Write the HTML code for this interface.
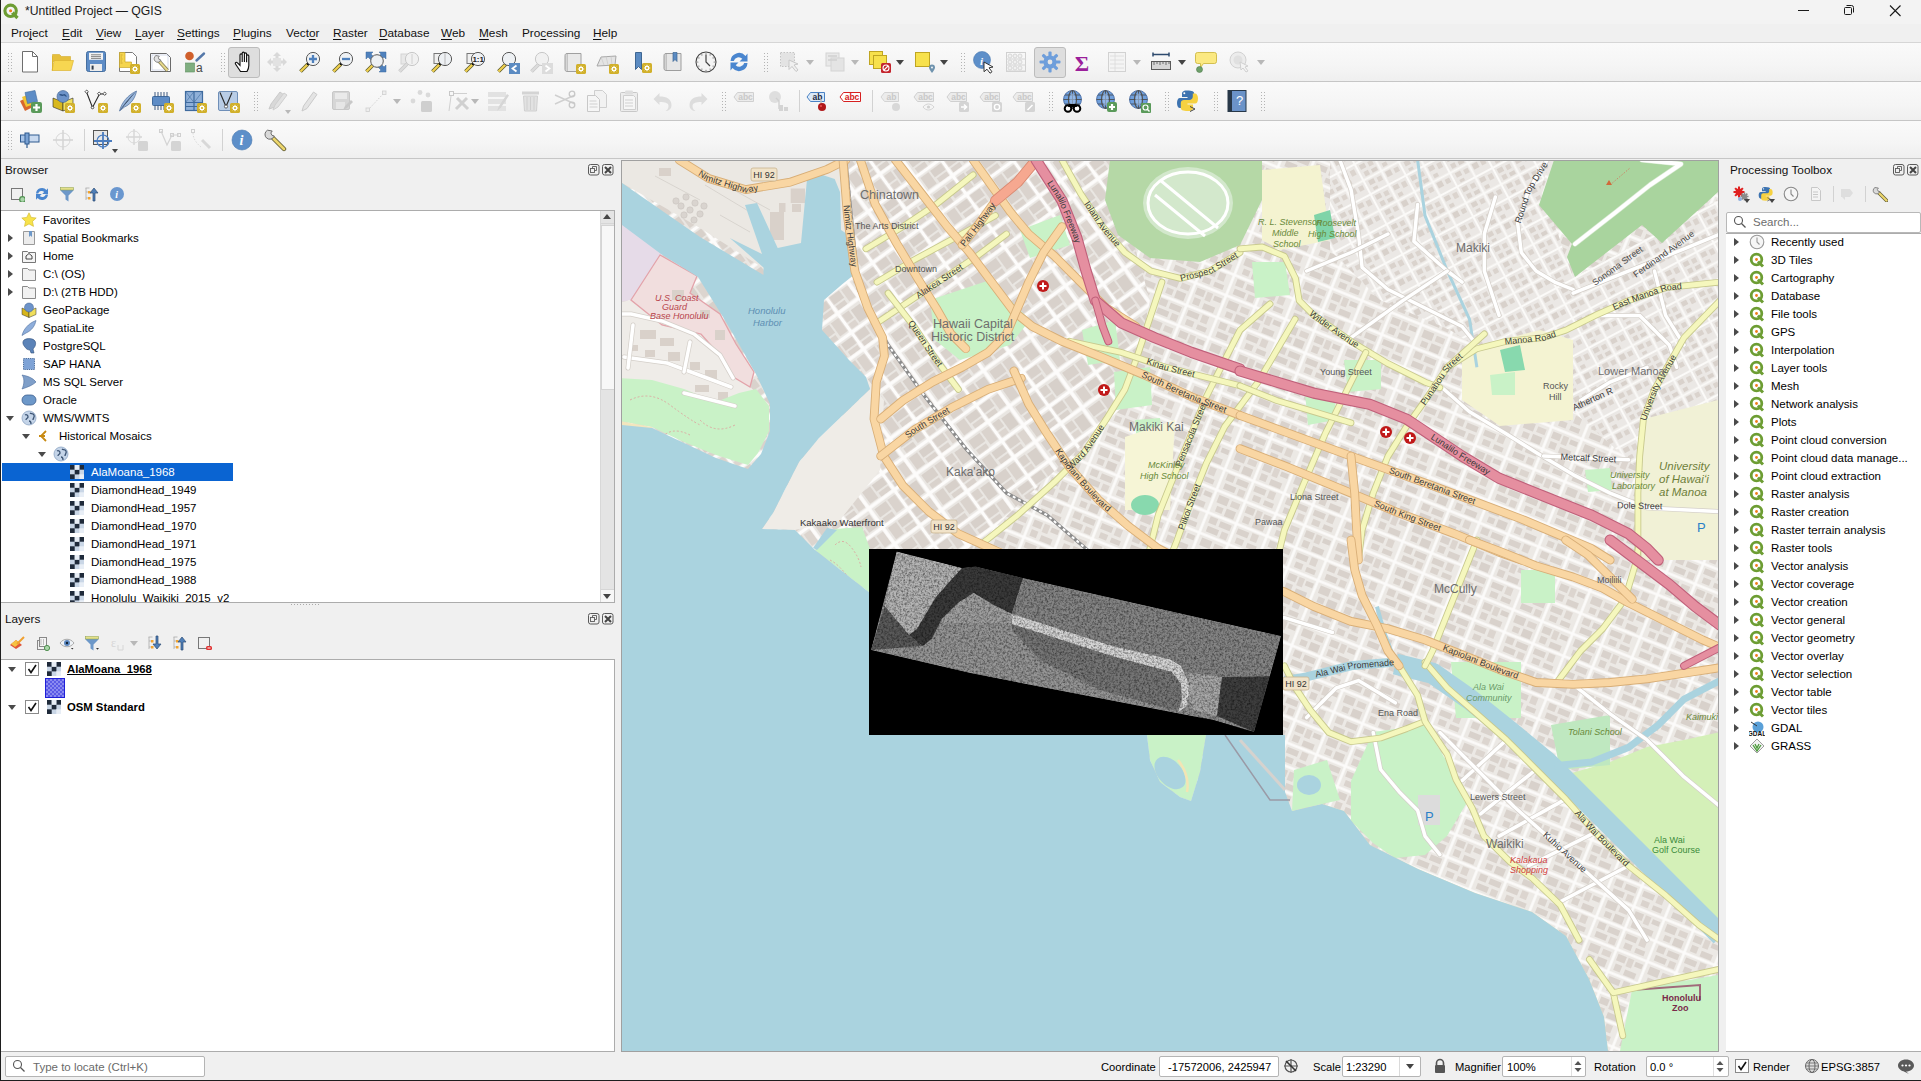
<!DOCTYPE html>
<html><head><meta charset="utf-8">
<style>
*{box-sizing:border-box;margin:0;padding:0}
html,body{width:1921px;height:1081px;overflow:hidden;background:#f0f0f0;font-family:"Liberation Sans",sans-serif;font-size:11.5px;color:#000}
.a{position:absolute}
.t{position:absolute;white-space:nowrap;line-height:14px}
.tb{position:absolute;left:1px;width:1920px;background:linear-gradient(#fafafa,#f5f5f5 60%,#efefef);border-bottom:1px solid #c6c6c6}
.tree{position:absolute;background:#fff;border:1px solid #acacac;border-left:none}
.row{position:absolute;height:18px;line-height:18px;white-space:nowrap}
.handle{position:absolute;width:5px;background-image:radial-gradient(circle,#b4b4b4 0.7px,transparent 1px);background-size:3px 3px;background-position:0 1px}
.sep{position:absolute;width:1px;background:#d2d2d2}
.dd{position:absolute;width:0;height:0;border-style:solid;border-color:#444 transparent transparent transparent}
.arr{position:absolute;width:0;height:0;border-style:solid}
.ar{border-width:4.5px 0 4.5px 5px;border-color:transparent transparent transparent #4a4a4a}
.ad{border-width:5px 4.5px 0 4.5px;border-color:#4a4a4a transparent transparent transparent}
.pbtn{position:absolute;background:#dedede;border:1px solid #bcbcbc;border-radius:3px}
.dockbtn{position:absolute;width:11px;height:11px;border:1px solid #555;border-radius:2px}
</style></head><body>

<div class="a" style="left:0;top:0;width:1921px;height:24px;background:#f3f3f3"></div>
<div class="a" style="left:0;top:24px;width:1921px;height:19px;background:#f0f0f0;border-bottom:1px solid #d6d6d6"></div>
<svg class="a" style="left:3px;top:3px" width="17" height="17" viewBox="0 0 17 17"><circle cx="7.6" cy="7.8" r="5.7" fill="none" stroke="#6d9d33" stroke-width="3.1"/><path d="M9 9.5 L14.5 15" stroke="#6d9d33" stroke-width="3.2"/><circle cx="7.6" cy="7.8" r="2.6" fill="#f4f4f4"/><circle cx="7.6" cy="7.8" r="1.5" fill="#ef7d1a"/></svg>
<div class="t" style="left:25px;top:4px;font-size:12.2px;color:#1b1b1b">*Untitled Project — QGIS</div>
<svg class="a" style="left:1796px;top:4px" width="110" height="14" viewBox="0 0 110 14"><path d="M2 6.5h11" stroke="#1a1a1a" stroke-width="1"/><rect x="48.5" y="3.5" width="7" height="7" rx="1" fill="none" stroke="#1a1a1a"/><path d="M50.5 1.5h5a2 2 0 0 1 2 2v5" fill="none" stroke="#1a1a1a"/><path d="M94 1.5l10.5 10.5M104.5 1.5l-10.5 10.5" stroke="#1a1a1a" stroke-width="1.1"/></svg>
<div class="t" style="left:11px;top:26px;font-size:11.8px;color:#111">Pro<span style="text-decoration:underline;text-underline-offset:1.5px">j</span>ect</div>
<div class="t" style="left:62px;top:26px;font-size:11.8px;color:#111"><span style="text-decoration:underline;text-underline-offset:1.5px">E</span>dit</div>
<div class="t" style="left:96px;top:26px;font-size:11.8px;color:#111"><span style="text-decoration:underline;text-underline-offset:1.5px">V</span>iew</div>
<div class="t" style="left:135px;top:26px;font-size:11.8px;color:#111"><span style="text-decoration:underline;text-underline-offset:1.5px">L</span>ayer</div>
<div class="t" style="left:177px;top:26px;font-size:11.8px;color:#111"><span style="text-decoration:underline;text-underline-offset:1.5px">S</span>ettings</div>
<div class="t" style="left:233px;top:26px;font-size:11.8px;color:#111"><span style="text-decoration:underline;text-underline-offset:1.5px">P</span>lugins</div>
<div class="t" style="left:286px;top:26px;font-size:11.8px;color:#111">Vect<span style="text-decoration:underline;text-underline-offset:1.5px">o</span>r</div>
<div class="t" style="left:333px;top:26px;font-size:11.8px;color:#111"><span style="text-decoration:underline;text-underline-offset:1.5px">R</span>aster</div>
<div class="t" style="left:379px;top:26px;font-size:11.8px;color:#111"><span style="text-decoration:underline;text-underline-offset:1.5px">D</span>atabase</div>
<div class="t" style="left:441px;top:26px;font-size:11.8px;color:#111"><span style="text-decoration:underline;text-underline-offset:1.5px">W</span>eb</div>
<div class="t" style="left:479px;top:26px;font-size:11.8px;color:#111"><span style="text-decoration:underline;text-underline-offset:1.5px">M</span>esh</div>
<div class="t" style="left:522px;top:26px;font-size:11.8px;color:#111">Pro<span style="text-decoration:underline;text-underline-offset:1.5px">c</span>essing</div>
<div class="t" style="left:593px;top:26px;font-size:11.8px;color:#111"><span style="text-decoration:underline;text-underline-offset:1.5px">H</span>elp</div>
<div class="tb" style="top:43px;height:39px"></div>
<div class="tb" style="top:82px;height:39px"></div>
<div class="tb" style="top:121px;height:38px"></div>
<div class="handle" style="left:7px;top:51.0px;height:22px"></div>
<div class="handle" style="left:220px;top:51.0px;height:22px"></div>
<div class="handle" style="left:763px;top:51.0px;height:22px"></div>
<div class="handle" style="left:960px;top:51.0px;height:22px"></div>
<div class="pbtn" style="left:228px;top:47px;width:32px;height:31px"></div>
<div class="pbtn" style="left:1034px;top:47px;width:32px;height:31px"></div>
<svg class="a" style="left:17.0px;top:50.0px" width="24" height="24" viewBox="0 0 24 24"><path d="M5.5 1.5h10l5 5v15.5h-15z" fill="#fff" stroke="#6e6e6e"/><path d="M15.5 1.5v5h5" fill="none" stroke="#6e6e6e"/></svg>
<svg class="a" style="left:50.0px;top:50.0px" width="24" height="24" viewBox="0 0 24 24"><path d="M2.5 4.5h7l2 2h9v5h-18z" fill="#e6bf3c" stroke="#d4ad2e" stroke-width=".6"/><path d="M2 20.5l2.2-10h19.3l-2.7 10z" fill="#f7d651" stroke="#dcb533" stroke-width=".7"/><path d="M2.5 6v14.5" stroke="#dcb533"/></svg>
<svg class="a" style="left:83.0px;top:50.0px" width="24" height="24" viewBox="0 0 24 24"><rect x="3.5" y="1.5" width="19" height="20" rx="2" fill="#5d8cc6" stroke="#466f9f"/><rect x="6" y="2.8" width="14" height="7" fill="#f4f4f4"/><path d="M8 4.8h10M8 6.6h10M8 8.4h10" stroke="#555" stroke-width=".7"/><rect x="7" y="14" width="12" height="7" fill="#ececec"/><rect x="8.6" y="15.6" width="2" height="4" fill="#2d3a4a"/></svg>
<svg class="a" style="left:116.0px;top:50.0px" width="24" height="24" viewBox="0 0 24 24"><path d="M3.5 2.5h13l4 4v15h-17z" fill="#fff" stroke="#7a7a7a"/><path d="M3.5 2.5h5.5v9.5h6.5v5.5h-12z" fill="#f5d54e" stroke="#c9a62a" stroke-width=".7"/><path d="M4.5 5h2M4.5 7h1.5M4.5 9h2M4.5 11h1.5M4.5 13h2" stroke="#b58f1f" stroke-width=".6"/><rect x="14" y="14" width="10" height="10" rx="1.6" fill="#d1b02a"/><g stroke="#fff" stroke-width="1"><path d="M19.0 15.8v6.4M15.8 19.0h6.4M16.8 16.8l4.4 4.4M21.2 16.8l-4.4 4.4"/></g><circle cx="19.0" cy="19.0" r="2.2" fill="#fff"/><circle cx="19.0" cy="19.0" r="1.1" fill="#d1b02a"/></svg>
<svg class="a" style="left:149.0px;top:50.0px" width="24" height="24" viewBox="0 0 24 24"><path d="M1.5 3.5h16l4 4v14h-20z" fill="#fff" stroke="#6a6a6a"/><rect x="3" y="5" width="16" height="15" fill="none" stroke="#b8c4dc" stroke-width=".6"/><path d="M9 10l9.5 10.5" stroke="#7d7650" stroke-width="3.4"/><path d="M9 10l9.5 10.5" stroke="#e6d889" stroke-width="2"/><path d="M7 5.5a3.6 3.6 0 1 0 5 4.6l-1.8-.5-.9-1.8 1-1.5z" fill="#e2e2e2" stroke="#7a7a7a" stroke-width=".9"/></svg>
<svg class="a" style="left:183.0px;top:50.0px" width="24" height="24" viewBox="0 0 24 24"><circle cx="6.5" cy="6" r="4.3" fill="#d0602c"/><path d="M13.5 10.5L21 3.5" stroke="#5578a9" stroke-width="2.4" stroke-linecap="round"/><rect x="2.5" y="13" width="9" height="9" fill="#7fae80" stroke="#5f8f60" stroke-width=".6"/><text x="13" y="21.5" font-size="12" fill="#4a4a4a" font-family="Liberation Sans">a</text></svg>
<svg class="a" style="left:232.0px;top:50.0px" width="24" height="24" viewBox="0 0 24 24"><path d="M8.5 21.5c-1.5-2.5-3.5-5-5-7.5c-.8-1.4.9-2.4 2-1.2l2.5 2.6V5c0-1.5 2.2-1.5 2.2 0v7V3.2c0-1.5 2.2-1.5 2.2 0V12V4c0-1.5 2.2-1.5 2.2 0v8.3V6c0-1.5 2.2-1.5 2.2 0v9.5c0 2.6-.8 4.3-1.8 6z" fill="#fff" stroke="#111" stroke-width="1.15"/></svg>
<svg class="a" style="left:265.0px;top:50.0px" width="24" height="24" viewBox="0 0 24 24"><path d="M12 2l4 4h-2.5v4.5H18V8l4 4-4 4v-2.5h-4.5V18H16l-4 4-4-4h2.5v-4.5H6V16l-4-4 4-4v2.5h4.5V6H8z" fill="#d9d9d9"/><rect x="8" y="8" width="8" height="8" fill="#e2e2e2"/></svg>
<svg class="a" style="left:298.0px;top:50.0px" width="24" height="24" viewBox="0 0 24 24"><path d="M2.5 21.5l7.5-7.5" stroke="#5b5a2a" stroke-width="3.8"/><path d="M2.5 21.5l7.5-7.5" stroke="#f0d050" stroke-width="2.3"/><circle cx="10" cy="14" r="1.3" fill="#111"/><circle cx="15" cy="9" r="6.6" fill="#eef1f4" stroke="#5a5a5a" stroke-width="1"/><path d="M15 5v8M11 9h8" stroke="#4f81bd" stroke-width="2.3"/></svg>
<svg class="a" style="left:331.0px;top:50.0px" width="24" height="24" viewBox="0 0 24 24"><path d="M2.5 21.5l7.5-7.5" stroke="#5b5a2a" stroke-width="3.8"/><path d="M2.5 21.5l7.5-7.5" stroke="#f0d050" stroke-width="2.3"/><circle cx="10" cy="14" r="1.3" fill="#111"/><circle cx="15" cy="9" r="6.6" fill="#eef1f4" stroke="#5a5a5a" stroke-width="1"/><path d="M11 9h8" stroke="#4f81bd" stroke-width="2.3"/></svg>
<svg class="a" style="left:364.0px;top:50.0px" width="24" height="24" viewBox="0 0 24 24"><path d="M10 2h-8v8M14 2h8v8M22 14v8h-8" fill="none" stroke="#4f81bd" stroke-width="0"/><path d="M2 2h7l-2 2 3 3-3 3-3-3-2 2z M22 2v7l-2-2-3 3-3-3 3-3-2-2z M22 22h-7l2-2-3-3 3-3 3 3 2-2z" fill="#4f81bd" stroke="#3c6a9e" stroke-width=".5"/><path d="M2.5 21.5l7.5-7.5" stroke="#5b5a2a" stroke-width="3.8"/><path d="M2.5 21.5l7.5-7.5" stroke="#f0d050" stroke-width="2.3"/><circle cx="10" cy="14" r="1.3" fill="#111"/><circle cx="13" cy="11" r="6.3" fill="#eef1f4" stroke="#5a5a5a" stroke-width="1"/></svg>
<svg class="a" style="left:397.0px;top:50.0px" width="24" height="24" viewBox="0 0 24 24"><rect x="4" y="4" width="9" height="10" fill="#e8e8e8" stroke="#d4d4d4"/><path d="M2.5 21.5l7.5-7.5" stroke="#c8c8c8" stroke-width="3.8"/><path d="M2.5 21.5l7.5-7.5" stroke="#dcdcdc" stroke-width="2.3"/><circle cx="15" cy="9" r="6.6" fill="#f1f1f1" stroke="#c8c8c8" stroke-width="1"/><path d="M15 4v10" stroke="#d0d0d0"/></svg>
<svg class="a" style="left:430.0px;top:50.0px" width="24" height="24" viewBox="0 0 24 24"><rect x="4" y="3.5" width="9" height="10" fill="#f0f0f0" stroke="#777"/><path d="M2.5 21.5l7.5-7.5" stroke="#5b5a2a" stroke-width="3.8"/><path d="M2.5 21.5l7.5-7.5" stroke="#f0d050" stroke-width="2.3"/><circle cx="10" cy="14" r="1.3" fill="#111"/><circle cx="15" cy="9" r="6.6" fill="#eef1f4" stroke="#5a5a5a" stroke-width="1"/><path d="M15 3v12" stroke="#aaa" stroke-width=".8"/></svg>
<svg class="a" style="left:463.0px;top:50.0px" width="24" height="24" viewBox="0 0 24 24"><rect x="4" y="3.5" width="9" height="10" fill="#f0f0f0" stroke="#777"/><path d="M2.5 21.5l7.5-7.5" stroke="#5b5a2a" stroke-width="3.8"/><path d="M2.5 21.5l7.5-7.5" stroke="#f0d050" stroke-width="2.3"/><circle cx="10" cy="14" r="1.3" fill="#111"/><circle cx="15" cy="9" r="6.6" fill="#eef1f4" stroke="#5a5a5a" stroke-width="1"/><text x="15.2" y="12.2" font-size="8" text-anchor="middle" font-weight="bold" fill="#222" font-family="Liberation Sans">1:1</text></svg>
<svg class="a" style="left:496.0px;top:50.0px" width="24" height="24" viewBox="0 0 24 24"><path d="M2.5 21.5l7.5-7.5" stroke="#5b5a2a" stroke-width="3.8"/><path d="M2.5 21.5l7.5-7.5" stroke="#f0d050" stroke-width="2.3"/><circle cx="10" cy="14" r="1.3" fill="#111"/><circle cx="13" cy="9" r="6.6" fill="#eef1f4" stroke="#5a5a5a" stroke-width="1"/><rect x="13" y="13" width="11" height="11" fill="#5b8bc2"/><path d="M20.5 15.5l-4 3 4 3" fill="none" stroke="#fff" stroke-width="1.8"/></svg>
<svg class="a" style="left:529.0px;top:50.0px" width="24" height="24" viewBox="0 0 24 24"><path d="M2.5 21.5l7.5-7.5" stroke="#c8c8c8" stroke-width="3.8"/><path d="M2.5 21.5l7.5-7.5" stroke="#dcdcdc" stroke-width="2.3"/><circle cx="13" cy="9" r="6.6" fill="#f1f1f1" stroke="#c8c8c8" stroke-width="1"/><rect x="13" y="13" width="11" height="11" fill="#dcdcdc"/><path d="M16.5 15.5l4 3-4 3" fill="none" stroke="#fff" stroke-width="1.8"/></svg>
<svg class="a" style="left:562.0px;top:50.0px" width="24" height="24" viewBox="0 0 24 24"><path d="M5 3.5h14v18H5z" fill="#e9e9e9" stroke="#a0a0a0"/><path d="M5 3.5c-2 0-2 2-2 2v14c0 2 2 2 2 2" fill="#d6d6d6" stroke="#a0a0a0"/><rect x="14" y="14" width="10" height="10" rx="1.6" fill="#d1b02a"/><g stroke="#fff" stroke-width="1"><path d="M19.0 15.8v6.4M15.8 19.0h6.4M16.8 16.8l4.4 4.4M21.2 16.8l-4.4 4.4"/></g><circle cx="19.0" cy="19.0" r="2.2" fill="#fff"/><circle cx="19.0" cy="19.0" r="1.1" fill="#d1b02a"/></svg>
<svg class="a" style="left:595.0px;top:50.0px" width="24" height="24" viewBox="0 0 24 24"><path d="M2 16l4-9 15-1-1 9z" fill="#e4e4e4" stroke="#a8a8a8"/><path d="M6 7l3 8M11 6l2 9M16 6l1 9" stroke="#c4c4c4" stroke-width=".6"/><rect x="14" y="14" width="10" height="10" rx="1.6" fill="#d1b02a"/><g stroke="#fff" stroke-width="1"><path d="M19.0 15.8v6.4M15.8 19.0h6.4M16.8 16.8l4.4 4.4M21.2 16.8l-4.4 4.4"/></g><circle cx="19.0" cy="19.0" r="2.2" fill="#fff"/><circle cx="19.0" cy="19.0" r="1.1" fill="#d1b02a"/></svg>
<svg class="a" style="left:629.0px;top:50.0px" width="24" height="24" viewBox="0 0 24 24"><path d="M6.5 2.5h6v17l-3-3-3 3z" fill="#5b8bc2" stroke="#3e6692"/><rect x="13" y="13" width="10" height="10" rx="1.6" fill="#d1b02a"/><g stroke="#fff" stroke-width="1"><path d="M18.0 14.8v6.4M14.8 18.0h6.4M15.8 15.8l4.4 4.4M20.2 15.8l-4.4 4.4"/></g><circle cx="18.0" cy="18.0" r="2.2" fill="#fff"/><circle cx="18.0" cy="18.0" r="1.1" fill="#d1b02a"/></svg>
<svg class="a" style="left:661.0px;top:50.0px" width="24" height="24" viewBox="0 0 24 24"><path d="M5 3.5h15v17H5z" fill="#e6e6e6" stroke="#9d9d9d"/><path d="M5 3.5c-2 0-2 2-2 2v13c0 2 2 2 2 2" fill="#d2d2d2" stroke="#9d9d9d"/><path d="M12 2.5h4v9l-2-2-2 2z" fill="#5b8bc2" stroke="#3e6692" stroke-width=".7"/></svg>
<svg class="a" style="left:694.0px;top:50.0px" width="24" height="24" viewBox="0 0 24 24"><circle cx="12" cy="12" r="10" fill="#f4f4f4" stroke="#444" stroke-width="1.1"/><path d="M12 4.5v7.5l4 4" fill="none" stroke="#444" stroke-width="1.2"/><circle cx="20.20" cy="12.00" r=".55" fill="#555"/><circle cx="19.10" cy="16.10" r=".55" fill="#555"/><circle cx="16.10" cy="19.10" r=".55" fill="#555"/><circle cx="12.00" cy="20.20" r=".55" fill="#555"/><circle cx="7.90" cy="19.10" r=".55" fill="#555"/><circle cx="4.90" cy="16.10" r=".55" fill="#555"/><circle cx="3.80" cy="12.00" r=".55" fill="#555"/><circle cx="4.90" cy="7.90" r=".55" fill="#555"/><circle cx="7.90" cy="4.90" r=".55" fill="#555"/><circle cx="12.00" cy="3.80" r=".55" fill="#555"/><circle cx="16.10" cy="4.90" r=".55" fill="#555"/><circle cx="19.10" cy="7.90" r=".55" fill="#555"/></svg>
<svg class="a" style="left:727.0px;top:50.0px" width="24" height="24" viewBox="0 0 24 24"><path d="M3.5 11a8.5 8.5 0 0 1 15-5l2-2.5v8h-8l2.8-2.7a5 5 0 0 0-8.5 2.2z" fill="#4a86cf"/><path d="M20.5 13a8.5 8.5 0 0 1-15 5l-2 2.5v-8h8l-2.8 2.7a5 5 0 0 0 8.5-2.2z" fill="#4a86cf"/></svg>
<svg class="a" style="left:778.0px;top:50.0px" width="24" height="24" viewBox="0 0 24 24"><rect x="2.5" y="2.5" width="14" height="14" fill="#e3e3e3" stroke="#c4c4c4" stroke-dasharray="1.5 1.5"/><path d="M11 10l9 4-4 1 4 5-2 1.5-4-5-3 3z" fill="#f0f0f0" stroke="#c8c8c8"/></svg>
<svg class="a" style="left:823.0px;top:50.0px" width="24" height="24" viewBox="0 0 24 24"><rect x="3" y="3" width="13" height="13" fill="#e9e9e9" stroke="#d4d4d4"/><rect x="8" y="8" width="13" height="13" fill="#e4e4e4" stroke="#d4d4d4"/><path d="M5 6h9M5 10h9" stroke="#d0d0d0" stroke-width="1.5"/></svg>
<svg class="a" style="left:868.0px;top:50.0px" width="24" height="24" viewBox="0 0 24 24"><rect x="1.5" y="1.5" width="13" height="13" fill="#f7e14c" stroke="#bfa522"/><rect x="5.5" y="5.5" width="13" height="13" fill="#f7e14c" stroke="#bfa522"/><rect x="13" y="13" width="10" height="10" rx="1.5" fill="#c4262e"/><circle cx="18" cy="18" r="3" fill="none" stroke="#fff" stroke-width="1.1"/><path d="M16 20l4-4" stroke="#fff" stroke-width="1.1"/></svg>
<svg class="a" style="left:913.0px;top:50.0px" width="24" height="24" viewBox="0 0 24 24"><rect x="2.5" y="2.5" width="14" height="14" fill="#f7e14c" stroke="#bfa522"/><path d="M19 23c-1.5-2-3-4-3-5.5a3 3 0 0 1 6 0c0 1.5-1.5 3.5-3 5.5z" fill="#6f93ae"/><circle cx="19" cy="17.5" r=".9" fill="#fff"/></svg>
<svg class="a" style="left:971.0px;top:50.0px" width="24" height="24" viewBox="0 0 24 24"><circle cx="11" cy="10" r="8.5" fill="#5d8fc9" stroke="#4978b0" stroke-width=".6"/><text x="10.5" y="14.5" font-size="11" font-weight="bold" font-style="italic" text-anchor="middle" fill="#fff" font-family="Liberation Serif">i</text><path d="M13 12l9 5-4 .8 3 4-2 1.4-3-4-3 2.5z" fill="#fff" stroke="#222" stroke-width=".9"/></svg>
<svg class="a" style="left:1004.0px;top:50.0px" width="24" height="24" viewBox="0 0 24 24"><rect x="2.5" y="2.5" width="19" height="19" fill="none" stroke="#d0d0d0"/><path d="M2 9h20M2 15h20M2 21h20" stroke="#d4d4d4"/><circle cx="6" cy="6" r="2" fill="#f0f0f0" stroke="#d0d0d0" stroke-width=".8"/><circle cx="6" cy="12" r="2" fill="#f0f0f0" stroke="#d0d0d0" stroke-width=".8"/><circle cx="6" cy="18" r="2" fill="#f0f0f0" stroke="#d0d0d0" stroke-width=".8"/><circle cx="11" cy="6" r="2" fill="#f0f0f0" stroke="#d0d0d0" stroke-width=".8"/><circle cx="11" cy="12" r="2" fill="#f0f0f0" stroke="#d0d0d0" stroke-width=".8"/><circle cx="11" cy="18" r="2" fill="#f0f0f0" stroke="#d0d0d0" stroke-width=".8"/><circle cx="16" cy="6" r="2" fill="#f0f0f0" stroke="#d0d0d0" stroke-width=".8"/><circle cx="16" cy="12" r="2" fill="#f0f0f0" stroke="#d0d0d0" stroke-width=".8"/><circle cx="16" cy="18" r="2" fill="#f0f0f0" stroke="#d0d0d0" stroke-width=".8"/></svg>
<svg class="a" style="left:1038.0px;top:50.0px" width="24" height="24" viewBox="0 0 24 24"><g transform="translate(12 12)"><rect x="-1.6" y="-10.5" width="3.2" height="5" rx="1" fill="#6e9edb" transform="rotate(0)"/><rect x="-1.6" y="-10.5" width="3.2" height="5" rx="1" fill="#6e9edb" transform="rotate(45)"/><rect x="-1.6" y="-10.5" width="3.2" height="5" rx="1" fill="#6e9edb" transform="rotate(90)"/><rect x="-1.6" y="-10.5" width="3.2" height="5" rx="1" fill="#6e9edb" transform="rotate(135)"/><rect x="-1.6" y="-10.5" width="3.2" height="5" rx="1" fill="#6e9edb" transform="rotate(180)"/><rect x="-1.6" y="-10.5" width="3.2" height="5" rx="1" fill="#6e9edb" transform="rotate(225)"/><rect x="-1.6" y="-10.5" width="3.2" height="5" rx="1" fill="#6e9edb" transform="rotate(270)"/><rect x="-1.6" y="-10.5" width="3.2" height="5" rx="1" fill="#6e9edb" transform="rotate(315)"/><circle r="6.6" fill="#6e9edb"/><circle r="2.4" fill="#e6e6e6"/></g></svg>
<svg class="a" style="left:1070.0px;top:50.0px" width="24" height="24" viewBox="0 0 24 24"><text x="12" y="20.5" font-size="22" font-weight="bold" text-anchor="middle" fill="#9b1e9b" font-family="Liberation Serif">Σ</text></svg>
<svg class="a" style="left:1105.0px;top:50.0px" width="24" height="24" viewBox="0 0 24 24"><rect x="3.5" y="2.5" width="17" height="19" fill="#f4f4f4" stroke="#d2d2d2"/><path d="M5 6h14M5 10h14M5 14h14M5 18h14M10 3v18" stroke="#dadada" stroke-width=".8"/></svg>
<svg class="a" style="left:1149.0px;top:50.0px" width="24" height="24" viewBox="0 0 24 24"><path d="M4 4.5h16M4 2.5v4M20 2.5v4" stroke="#2d4a6e" stroke-width="1.5"/><rect x="2.5" y="11.5" width="19" height="8" fill="#d6d6d6" stroke="#5a5a5a"/><path d="M5 12v3M8 12v2M11 12v3M14 12v2M17 12v3M20 12v2" stroke="#555" stroke-width=".8"/></svg>
<svg class="a" style="left:1194.0px;top:50.0px" width="24" height="24" viewBox="0 0 24 24"><path d="M3.5 2.5h17a2 2 0 0 1 2 2v7a2 2 0 0 1-2 2h-11l-3 4v-4h-3a2 2 0 0 1-2-2v-7a2 2 0 0 1 2-2z" fill="#fbe982" stroke="#c9b335" stroke-width=".8"/><circle cx="5.5" cy="19.5" r="3" fill="#6ea06a" stroke="#4d7a4b" stroke-width=".6"/></svg>
<svg class="a" style="left:1228.0px;top:50.0px" width="24" height="24" viewBox="0 0 24 24"><circle cx="10" cy="10" r="8" fill="#ececec" stroke="#d2d2d2"/><circle cx="10" cy="10" r="4.5" fill="#e0e0e0"/><path d="M12 12l8 4-3 1 3 4-2 1-3-4-2 2z" fill="#f4f4f4" stroke="#d0d0d0"/></svg>
<div class="dd" style="left:805.5px;top:59.5px;border-width:5px 4.5px 0 4.5px;border-top-color:#b8b8b8"></div>
<div class="dd" style="left:850.5px;top:59.5px;border-width:5px 4.5px 0 4.5px;border-top-color:#b8b8b8"></div>
<div class="dd" style="left:895.5px;top:59.5px;border-width:5px 4.5px 0 4.5px;border-top-color:#444"></div>
<div class="dd" style="left:939.5px;top:59.5px;border-width:5px 4.5px 0 4.5px;border-top-color:#444"></div>
<div class="dd" style="left:1132.5px;top:59.5px;border-width:5px 4.5px 0 4.5px;border-top-color:#b8b8b8"></div>
<div class="dd" style="left:1177.5px;top:59.5px;border-width:5px 4.5px 0 4.5px;border-top-color:#444"></div>
<div class="dd" style="left:1256.5px;top:59.5px;border-width:5px 4.5px 0 4.5px;border-top-color:#b8b8b8"></div>
<div class="handle" style="left:7px;top:90.0px;height:22px"></div>
<div class="handle" style="left:253px;top:90.0px;height:22px"></div>
<div class="handle" style="left:721px;top:90.0px;height:22px"></div>
<div class="handle" style="left:1048px;top:90.0px;height:22px"></div>
<div class="handle" style="left:1164px;top:90.0px;height:22px"></div>
<div class="handle" style="left:1213px;top:90.0px;height:22px"></div>
<div class="handle" style="left:1260px;top:90.0px;height:22px"></div>
<div class="sep" style="left:799px;top:90.0px;height:22px"></div>
<div class="sep" style="left:872px;top:90.0px;height:22px"></div>
<svg class="a" style="left:18.0px;top:89.0px" width="24" height="24" viewBox="0 0 24 24"><path d="M2 12l8-4 5 10-8 4z" fill="#d8672e"/><path d="M4 8l8-3 4 10-8 3z" fill="#f2c531"/><path d="M7 3.5l10-2 2.5 11-10 2z" fill="#5d8cc6" stroke="#3f6b9e" stroke-width=".6"/><rect x="13" y="13" width="11" height="11" rx="2" fill="#5a9a5a"/><path d="M18.5 15v7M15 18.5h7" stroke="#fff" stroke-width="2.2"/></svg>
<svg class="a" style="left:51.0px;top:89.0px" width="24" height="24" viewBox="0 0 24 24"><path d="M2 9l10 4v9L2 18z" fill="#d8b81e" stroke="#2a2a2a" stroke-width=".6"/><path d="M12 13l10-4v9l-10 4z" fill="#f0e060" stroke="#2a2a2a" stroke-width=".6"/><circle cx="12" cy="7.5" r="6" fill="#6d93c9" stroke="#3d5f8f" stroke-width=".6"/><path d="M8.5 6c1.5-1 2.5 1 4 0s2 1.5 3 1" stroke="#2f5487" stroke-width="1.4" fill="none"/><rect x="14" y="14" width="10" height="10" rx="1.6" fill="#d1b02a"/><g stroke="#fff" stroke-width="1"><path d="M19.0 15.8v6.4M15.8 19.0h6.4M16.8 16.8l4.4 4.4M21.2 16.8l-4.4 4.4"/></g><circle cx="19.0" cy="19.0" r="2.2" fill="#fff"/><circle cx="19.0" cy="19.0" r="1.1" fill="#d1b02a"/></svg>
<svg class="a" style="left:84.0px;top:89.0px" width="24" height="24" viewBox="0 0 24 24"><path d="M2.5 3l6 15.5 7-13.5h5" fill="none" stroke="#2a2a2a" stroke-width="1.1"/><g fill="#fff" stroke="#333" stroke-width=".8"><rect x="1.5" y="1.5" width="2.4" height="2.4" transform="rotate(45 2.7 2.7)"/><circle cx="8.5" cy="18.5" r="1.3"/><rect x="14" y="3.5" width="2.4" height="2.4" transform="rotate(45 15.2 4.7)"/><rect x="19.5" y="3.5" width="2.4" height="2.4" transform="rotate(45 20.7 4.7)"/></g><rect x="14" y="14" width="10" height="10" rx="1.6" fill="#d1b02a"/><g stroke="#fff" stroke-width="1"><path d="M19.0 15.8v6.4M15.8 19.0h6.4M16.8 16.8l4.4 4.4M21.2 16.8l-4.4 4.4"/></g><circle cx="19.0" cy="19.0" r="2.2" fill="#fff"/><circle cx="19.0" cy="19.0" r="1.1" fill="#d1b02a"/></svg>
<svg class="a" style="left:117.0px;top:89.0px" width="24" height="24" viewBox="0 0 24 24"><path d="M2.5 22c2-8 8-16 17-20c-1 6-5 13-12 16z" fill="#9cb8dc" stroke="#4f6f9c" stroke-width=".7"/><path d="M3 21.5c4-6 9-12 15-18" stroke="#4f6f9c" stroke-width=".7"/><rect x="14" y="14" width="10" height="10" rx="1.6" fill="#d1b02a"/><g stroke="#fff" stroke-width="1"><path d="M19.0 15.8v6.4M15.8 19.0h6.4M16.8 16.8l4.4 4.4M21.2 16.8l-4.4 4.4"/></g><circle cx="19.0" cy="19.0" r="2.2" fill="#fff"/><circle cx="19.0" cy="19.0" r="1.1" fill="#d1b02a"/></svg>
<svg class="a" style="left:150.0px;top:89.0px" width="24" height="24" viewBox="0 0 24 24"><rect x="2.5" y="7.5" width="17" height="9" rx="1" fill="#5d8cc6" stroke="#3f6b9e"/><path d="M5 3v4.5M5 16.5v4.5" stroke="#3f5a80" stroke-width="1"/><path d="M8 3v4.5M8 16.5v4.5" stroke="#3f5a80" stroke-width="1"/><path d="M11 3v4.5M11 16.5v4.5" stroke="#3f5a80" stroke-width="1"/><path d="M14 3v4.5M14 16.5v4.5" stroke="#3f5a80" stroke-width="1"/><path d="M17 3v4.5M17 16.5v4.5" stroke="#3f5a80" stroke-width="1"/><rect x="14" y="14" width="10" height="10" rx="1.6" fill="#d1b02a"/><g stroke="#fff" stroke-width="1"><path d="M19.0 15.8v6.4M15.8 19.0h6.4M16.8 16.8l4.4 4.4M21.2 16.8l-4.4 4.4"/></g><circle cx="19.0" cy="19.0" r="2.2" fill="#fff"/><circle cx="19.0" cy="19.0" r="1.1" fill="#d1b02a"/></svg>
<svg class="a" style="left:183.0px;top:89.0px" width="24" height="24" viewBox="0 0 24 24"><rect x="2.5" y="2.5" width="17" height="19" fill="#8fb0d8" stroke="#3f6b9e" stroke-width="1.2"/><path d="M2.5 13.5h17M11 2.5v19M2.5 17.5h17" stroke="#3f6b9e" stroke-width="1.2"/><path d="M2.5 2.5l8.5 11M11 2.5l-8.5 11M11 13.5l8.5-11" stroke="#3f6b9e" stroke-width=".6"/><rect x="14" y="14" width="10" height="10" rx="1.6" fill="#d1b02a"/><g stroke="#fff" stroke-width="1"><path d="M19.0 15.8v6.4M15.8 19.0h6.4M16.8 16.8l4.4 4.4M21.2 16.8l-4.4 4.4"/></g><circle cx="19.0" cy="19.0" r="2.2" fill="#fff"/><circle cx="19.0" cy="19.0" r="1.1" fill="#d1b02a"/></svg>
<svg class="a" style="left:216.0px;top:89.0px" width="24" height="24" viewBox="0 0 24 24"><rect x="2.5" y="2.5" width="19" height="19" rx="1.5" fill="#b9cde6" stroke="#6f8fb8"/><path d="M4 3.5l6 14 6-14" fill="none" stroke="#2a2a2a" stroke-width="1.1"/><circle cx="10" cy="17.5" r="1.6" fill="#fff" stroke="#333" stroke-width=".7"/><rect x="14" y="14" width="10" height="10" rx="1.6" fill="#d1b02a"/><g stroke="#fff" stroke-width="1"><path d="M19.0 15.8v6.4M15.8 19.0h6.4M16.8 16.8l4.4 4.4M21.2 16.8l-4.4 4.4"/></g><circle cx="19.0" cy="19.0" r="2.2" fill="#fff"/><circle cx="19.0" cy="19.0" r="1.1" fill="#d1b02a"/></svg>
<svg class="a" style="left:265.0px;top:89.0px" width="24" height="24" viewBox="0 0 24 24"><path d="M4 20l2-5 9-12 4 3-9 12z" fill="#d8d8d8" stroke="#cacaca"/><path d="M8 21l2-5 9-12 3 2-9 12z" fill="#e2e2e2" stroke="#cfcfcf"/></svg>
<svg class="a" style="left:297.0px;top:89.0px" width="24" height="24" viewBox="0 0 24 24"><path d="M5 22l1.5-5 10-14 3.5 2.5-10 14z" fill="#e4e4e4" stroke="#cacaca"/></svg>
<svg class="a" style="left:330.0px;top:89.0px" width="24" height="24" viewBox="0 0 24 24"><rect x="2.5" y="2.5" width="17" height="18" rx="1.5" fill="#d6d6d6" stroke="#c8c8c8"/><rect x="5" y="4" width="12" height="6" fill="#eaeaea"/><rect x="6" y="13" width="9" height="7" fill="#e6e6e6"/><path d="M13 21l2-4 6-6 2 2-6 6z" fill="#c8c8c8"/></svg>
<svg class="a" style="left:364.0px;top:89.0px" width="24" height="24" viewBox="0 0 24 24"><path d="M4 21L20 4" stroke="#d0d0d0" stroke-dasharray="1.5 1.5"/><rect x="2" y="19" width="3.5" height="3.5" fill="#eee" stroke="#cfcfcf" stroke-width=".8"/><rect x="18.5" y="2" width="3.5" height="3.5" fill="#eee" stroke="#cfcfcf" stroke-width=".8"/></svg>
<svg class="a" style="left:409.0px;top:89.0px" width="24" height="24" viewBox="0 0 24 24"><circle cx="11" cy="3.5" r="2.4" fill="#dadada"/><circle cx="19" cy="6" r="2.4" fill="#dadada"/><circle cx="4" cy="12" r="2.4" fill="#dadada"/><rect x="12" y="12" width="11" height="11" rx="1.5" fill="#cfcfcf"/></svg>
<svg class="a" style="left:447.0px;top:89.0px" width="24" height="24" viewBox="0 0 24 24"><rect x="2.5" y="2.5" width="4" height="4" fill="none" stroke="#c8c8c8"/><path d="M7 4.5h13M4 7l-2 15" stroke="#d0d0d0"/><path d="M9 20l11-11M10 9l11 11" stroke="#d0d0d0" stroke-width="3"/></svg>
<svg class="a" style="left:486.0px;top:89.0px" width="24" height="24" viewBox="0 0 24 24"><rect x="2" y="3" width="18" height="5" fill="#e2e2e2"/><rect x="2" y="10" width="18" height="5" fill="#e2e2e2"/><rect x="2" y="17" width="18" height="5" fill="#e2e2e2"/><path d="M11 22l2-5 8-12 2 1.5-8 12z" fill="#d6d6d6"/></svg>
<svg class="a" style="left:519.0px;top:89.0px" width="24" height="24" viewBox="0 0 24 24"><rect x="3" y="2.5" width="17" height="3" fill="#d4d4d4"/><path d="M4.5 7h14l-1 15h-12z" fill="#e2e2e2" stroke="#d0d0d0"/><path d="M8 8v13M11.5 8v13M15 8v13" stroke="#d0d0d0"/></svg>
<svg class="a" style="left:553.0px;top:89.0px" width="24" height="24" viewBox="0 0 24 24"><path d="M2 6l20 9M2 15l20-9" stroke="#d0d0d0" stroke-width="1.4"/><circle cx="19" cy="5" r="2.8" fill="none" stroke="#c8c8c8" stroke-width="1.3"/><circle cx="19" cy="16" r="2.8" fill="none" stroke="#c8c8c8" stroke-width="1.3"/></svg>
<svg class="a" style="left:585.0px;top:89.0px" width="24" height="24" viewBox="0 0 24 24"><path d="M9.5 1.5h8l4 4v13h-12z" fill="#f2f2f2" stroke="#cfcfcf"/><path d="M2.5 6.5h8l4 4v12h-12z" fill="#f6f6f6" stroke="#c8c8c8"/><path d="M4.5 12h7M4.5 15h8M4.5 18h8" stroke="#d0d0d0"/></svg>
<svg class="a" style="left:618.0px;top:89.0px" width="24" height="24" viewBox="0 0 24 24"><rect x="2.5" y="3.5" width="17" height="19" rx="1" fill="#ececec" stroke="#c8c8c8"/><rect x="7" y="1.5" width="8" height="4" rx="1" fill="#dedede"/><path d="M5.5 6.5h10l2 2v12h-12z" fill="#f6f6f6" stroke="#cfcfcf"/><path d="M7 11h8M7 14h8M7 17h8" stroke="#d0d0d0"/></svg>
<svg class="a" style="left:652.0px;top:89.0px" width="24" height="24" viewBox="0 0 24 24"><path d="M1.5 10l6-6v3.5c7 0 12 2.5 12 8.5c0 4-3 6-6 6c2-1 3-3 3-5c0-3-3-4-9-4v3z" fill="#dddddd"/></svg>
<svg class="a" style="left:685.0px;top:89.0px" width="24" height="24" viewBox="0 0 24 24"><path d="M22.5 10l-6-6v3.5c-7 0-12 2.5-12 8.5c0 4 3 6 6 6c-2-1-3-3-3-5c0-3 3-4 9-4v3z" fill="#dddddd"/></svg>
<svg class="a" style="left:733.0px;top:89.0px" width="24" height="24" viewBox="0 0 24 24"><path d="M4.5 3.5h16v9h-16l-3.5-4.5z" fill="#ececec" stroke="#d0d0d0"/><text x="12.5" y="11.2" font-size="8.5" font-weight="bold" text-anchor="middle" fill="#c8c8c8" font-family="Liberation Sans">abc</text></svg>
<svg class="a" style="left:767.0px;top:89.0px" width="24" height="24" viewBox="0 0 24 24"><circle cx="8" cy="8" r="6" fill="#dedede"/><path d="M9 9l3 3v8" fill="none" stroke="#d0d0d0" stroke-width="1.4"/><rect x="12" y="16" width="4" height="6" fill="#d4d4d4"/><rect x="17" y="18" width="4" height="4" fill="#d4d4d4"/></svg>
<svg class="a" style="left:806.0px;top:89.0px" width="24" height="24" viewBox="0 0 24 24"><path d="M4.5 3.5h14v9h-14l-3.5-4.5z" fill="#dbe9f8" stroke="#4a82c4"/><text x="11.5" y="11.2" font-size="8.5" font-weight="bold" text-anchor="middle" fill="#1a2a44" font-family="Liberation Sans">ab</text><path d="M15 10v4" stroke="#bbb" stroke-width="1.5"/><circle cx="16" cy="18" r="4" fill="#b0181a"/><circle cx="15" cy="17" r="1" fill="#e55"/></svg>
<svg class="a" style="left:839.0px;top:89.0px" width="24" height="24" viewBox="0 0 24 24"><path d="M4.5 3.5h17v9h-17l-3.5-4.5z" fill="#fff" stroke="#d62020"/><text x="13.0" y="11.2" font-size="8.5" font-weight="bold" text-anchor="middle" fill="#d62020" font-family="Liberation Sans">abc</text></svg>
<svg class="a" style="left:880.0px;top:89.0px" width="24" height="24" viewBox="0 0 24 24"><path d="M4.5 3.5h14v9h-14l-3.5-4.5z" fill="#ececec" stroke="#d4d4d4"/><text x="11.5" y="11.2" font-size="8.5" font-weight="bold" text-anchor="middle" fill="#c8c8c8" font-family="Liberation Sans">ab</text><circle cx="16" cy="18" r="4" fill="#d8d8d8"/></svg>
<svg class="a" style="left:913.0px;top:89.0px" width="24" height="24" viewBox="0 0 24 24"><path d="M4.5 3.5h16v9h-16l-3.5-4.5z" fill="#ececec" stroke="#d0d0d0"/><text x="12.5" y="11.2" font-size="8.5" font-weight="bold" text-anchor="middle" fill="#c8c8c8" font-family="Liberation Sans">abc</text><path d="M10 18c3-4 8-4 11 0c-3 4-8 4-11 0z" fill="#f4f4f4" stroke="#d4d4d4"/><circle cx="15.5" cy="18" r="1.6" fill="#d0d0d0"/></svg>
<svg class="a" style="left:946.0px;top:89.0px" width="24" height="24" viewBox="0 0 24 24"><path d="M4.5 3.5h16v9h-16l-3.5-4.5z" fill="#ececec" stroke="#d0d0d0"/><text x="12.5" y="11.2" font-size="8.5" font-weight="bold" text-anchor="middle" fill="#c8c8c8" font-family="Liberation Sans">abc</text><rect x="13" y="13" width="10" height="10" rx="1.5" fill="#d4d4d4"/><path d="M15 18h5M18 15.5l2.5 2.5-2.5 2.5" fill="none" stroke="#fff" stroke-width="1.6"/></svg>
<svg class="a" style="left:979.0px;top:89.0px" width="24" height="24" viewBox="0 0 24 24"><path d="M4.5 3.5h16v9h-16l-3.5-4.5z" fill="#ececec" stroke="#d0d0d0"/><text x="12.5" y="11.2" font-size="8.5" font-weight="bold" text-anchor="middle" fill="#c8c8c8" font-family="Liberation Sans">abc</text><rect x="13" y="13" width="10" height="10" rx="1.5" fill="#d4d4d4"/><circle cx="18" cy="18" r="2.6" fill="none" stroke="#fff" stroke-width="1.4"/></svg>
<svg class="a" style="left:1012.0px;top:89.0px" width="24" height="24" viewBox="0 0 24 24"><path d="M4.5 3.5h16v9h-16l-3.5-4.5z" fill="#ececec" stroke="#d0d0d0"/><text x="12.5" y="11.2" font-size="8.5" font-weight="bold" text-anchor="middle" fill="#c8c8c8" font-family="Liberation Sans">abc</text><rect x="13" y="13" width="10" height="10" rx="1.5" fill="#d4d4d4"/><path d="M15.5 21l5-5" stroke="#fff" stroke-width="1.6"/></svg>
<svg class="a" style="left:1061.0px;top:89.0px" width="24" height="24" viewBox="0 0 24 24"><circle cx="11.5" cy="10.5" r="9" fill="#6f9fdc" stroke="#3a5f9a" stroke-width=".8"/><ellipse cx="11.5" cy="10.5" rx="4" ry="9" fill="none" stroke="#555" stroke-width="1.2"/><path d="M2.5 10.5h18M4 6h15M4 15h15M11.5 1.5v18" stroke="#444" stroke-width=".8"/><ellipse cx="11.5" cy="10.5" rx="3" ry="6" fill="#a9c8f0" opacity=".6"/><circle cx="7" cy="19.5" r="3.3" fill="#fff" stroke="#000" stroke-width="2"/><circle cx="16" cy="19.5" r="3.3" fill="#fff" stroke="#000" stroke-width="2"/><path d="M8 15h7l1 3H7z" fill="#000"/></svg>
<svg class="a" style="left:1094.0px;top:89.0px" width="24" height="24" viewBox="0 0 24 24"><circle cx="11.5" cy="10.5" r="9" fill="#6f9fdc" stroke="#3a5f9a" stroke-width=".8"/><ellipse cx="11.5" cy="10.5" rx="4" ry="9" fill="none" stroke="#555" stroke-width="1.2"/><path d="M2.5 10.5h18M4 6h15M4 15h15M11.5 1.5v18" stroke="#444" stroke-width=".8"/><ellipse cx="11.5" cy="10.5" rx="3" ry="6" fill="#a9c8f0" opacity=".6"/><rect x="13" y="13" width="10" height="10" rx="2" fill="#5a9a5a"/><path d="M18.0 15v6M15 18.0h6" stroke="#fff" stroke-width="2.2"/></svg>
<svg class="a" style="left:1127.0px;top:89.0px" width="24" height="24" viewBox="0 0 24 24"><circle cx="11.5" cy="10.5" r="9" fill="#6f9fdc" stroke="#3a5f9a" stroke-width=".8"/><ellipse cx="11.5" cy="10.5" rx="4" ry="9" fill="none" stroke="#555" stroke-width="1.2"/><path d="M2.5 10.5h18M4 6h15M4 15h15M11.5 1.5v18" stroke="#444" stroke-width=".8"/><ellipse cx="11.5" cy="10.5" rx="3" ry="6" fill="#a9c8f0" opacity=".6"/><rect x="14" y="14" width="10" height="10" rx="1" fill="#5a9a5a"/><circle cx="18.5" cy="18.5" r="2.5" fill="none" stroke="#fff" stroke-width="1.2"/><path d="M20 20l2.5 2.5" stroke="#fff" stroke-width="1.4"/></svg>
<svg class="a" style="left:1176.0px;top:89.0px" width="24" height="24" viewBox="0 0 24 24"><path d="M11 1.5c-4.5 0-5 2-5 3.5V8h5.5v1H4C2 9 1 11 1 14s1.2 5 3 5h2.2v-3c0-2 1.5-3.5 3.5-3.5h5.5c1.5 0 3-1.2 3-3V4.5C18.2 2.8 16.5 1.5 11 1.5z" fill="#3d73b0"/><circle cx="8.3" cy="4.2" r="1" fill="#fff"/><path d="M12 22c4.5 0 5-2 5-3.5V15.5h-5.5v-1H19c2 0 3-2 3-5s-1.2-5-3-5h-2.2v3c0 2-1.5 3.5-3.5 3.5H7.8c-1.5 0-3 1.2-3 3V19c0 1.7 1.7 3 7.2 3z" fill="#f6d141"/><path d="M14 17.5l5 2.5-5 2.5" fill="none" stroke="#444" stroke-width="1"/></svg>
<svg class="a" style="left:1225.0px;top:89.0px" width="24" height="24" viewBox="0 0 24 24"><rect x="3" y="1.5" width="18" height="21" fill="#6b93c8" stroke="#283848"/><rect x="3" y="1.5" width="4" height="21" fill="#283848"/><text x="14.5" y="16" font-size="13" text-anchor="middle" fill="#fff" font-family="Liberation Sans">?</text></svg>
<div class="dd" style="left:285px;top:109.5px;border-width:4px 3px 0 3px;border-top-color:#b8b8b8"></div>
<div class="dd" style="left:392.5px;top:98.5px;border-width:5px 4.5px 0 4.5px;border-top-color:#b8b8b8"></div>
<div class="dd" style="left:470.5px;top:98.5px;border-width:5px 4.5px 0 4.5px;border-top-color:#b8b8b8"></div>
<div class="handle" style="left:7px;top:129.0px;height:22px"></div>
<div class="sep" style="left:84px;top:129.0px;height:22px"></div>
<div class="sep" style="left:222px;top:129.0px;height:22px"></div>
<svg class="a" style="left:18.0px;top:128.0px" width="24" height="24" viewBox="0 0 24 24"><rect x="2.5" y="7" width="8" height="7" fill="#a8c4e8" stroke="#2e5a8f"/><rect x="10" y="7" width="11" height="7" fill="#c9daf0" stroke="#2e5a8f"/><rect x="7" y="5" width="4" height="11" fill="#7aa2d4" stroke="#2e5a8f"/><path d="M9 16v4" stroke="#2e5a8f" stroke-width="1.2"/></svg>
<svg class="a" style="left:51.0px;top:128.0px" width="24" height="24" viewBox="0 0 24 24"><circle cx="12" cy="12" r="7" fill="none" stroke="#d8d8d8"/><path d="M12 2v20M2 12h20" stroke="#d4d4d4" stroke-width="1.5"/></svg>
<svg class="a" style="left:91.0px;top:128.0px" width="24" height="24" viewBox="0 0 24 24"><rect x="2.5" y="2.5" width="14" height="14" fill="#e8e8e8" stroke="#555"/><circle cx="12" cy="13" r="6" fill="none" stroke="#4a7cbf" stroke-width="1.2"/><path d="M12 4v17M3 13h18" stroke="#4a7cbf" stroke-width="1.8"/></svg>
<svg class="a" style="left:125.0px;top:128.0px" width="24" height="24" viewBox="0 0 24 24"><circle cx="9" cy="9" r="6" fill="none" stroke="#dadada"/><path d="M9 1v16M1 9h16" stroke="#d6d6d6" stroke-width="1.4"/><rect x="13" y="13" width="10" height="10" rx="1.5" fill="#d4d4d4"/></svg>
<svg class="a" style="left:158.0px;top:128.0px" width="24" height="24" viewBox="0 0 24 24"><path d="M3 3l6 14 5-10h7" fill="none" stroke="#d4d4d4" stroke-width="1.2"/><rect x="1.5" y="1.5" width="3" height="3" fill="none" stroke="#d0d0d0"/><rect x="12.5" y="5.5" width="3" height="3" fill="none" stroke="#d0d0d0"/><rect x="19.5" y="5.5" width="3" height="3" fill="none" stroke="#d0d0d0"/><rect x="13" y="13" width="10" height="10" rx="1.5" fill="#d4d4d4"/></svg>
<svg class="a" style="left:190.0px;top:128.0px" width="24" height="24" viewBox="0 0 24 24"><rect x="1.5" y="1.5" width="3" height="3" fill="none" stroke="#d0d0d0"/><path d="M3 5c0 5 3 10 8 14" fill="none" stroke="#dadada" stroke-dasharray="1.5 1.5"/><path d="M12 12l8 8" stroke="#d8d8d8" stroke-width="3"/></svg>
<svg class="a" style="left:230.0px;top:128.0px" width="24" height="24" viewBox="0 0 24 24"><circle cx="12" cy="12" r="10" fill="#5d8fc9" stroke="#4877ae" stroke-width=".6"/><text x="11.5" y="17" font-size="14" font-weight="bold" font-style="italic" text-anchor="middle" fill="#fff" font-family="Liberation Serif">i</text></svg>
<svg class="a" style="left:263.0px;top:128.0px" width="24" height="24" viewBox="0 0 24 24"><path d="M10 10l11 11" stroke="#5f5a35" stroke-width="4.4" stroke-linecap="round"/><path d="M10 10l11 11" stroke="#ecd66c" stroke-width="2.8" stroke-linecap="round"/><path d="M4.5 2.2a4.8 4.8 0 1 0 6.8 5.8l-2.3-.6-1.2-2.4 1.4-2z" fill="#d9d9d9" stroke="#6f6f6f" stroke-width="1"/></svg>
<div class="dd" style="left:112px;top:148.5px;border-width:4px 3px 0 3px;border-top-color:#444"></div>
<div class="a" style="left:1px;top:159px;width:620px;height:893px;background:#f0f0f0"></div>
<div class="t" style="left:5px;top:163px;font-size:11.8px;color:#111">Browser</div>
<svg class="a" style="left:588px;top:164px" width="26" height="12" viewBox="0 0 26 12"><rect x=".5" y=".5" width="10.5" height="10.5" rx="2" fill="none" stroke="#5a5a5a"/><rect x="2.5" y="4.5" width="4" height="4" fill="none" stroke="#5a5a5a" stroke-width=".9"/><path d="M4.5 4.5v-2h4v4h-2" fill="none" stroke="#5a5a5a" stroke-width=".9"/><rect x="14.5" y=".5" width="10.5" height="10.5" rx="2" fill="none" stroke="#5a5a5a"/><path d="M17 3l6 6M23 3l-6 6" stroke="#444" stroke-width="2"/></svg>
<div class="t" style="left:5px;top:612px;font-size:11.8px;color:#111">Layers</div>
<svg class="a" style="left:588px;top:613px" width="26" height="12" viewBox="0 0 26 12"><rect x=".5" y=".5" width="10.5" height="10.5" rx="2" fill="none" stroke="#5a5a5a"/><rect x="2.5" y="4.5" width="4" height="4" fill="none" stroke="#5a5a5a" stroke-width=".9"/><path d="M4.5 4.5v-2h4v4h-2" fill="none" stroke="#5a5a5a" stroke-width=".9"/><rect x="14.5" y=".5" width="10.5" height="10.5" rx="2" fill="none" stroke="#5a5a5a"/><path d="M17 3l6 6M23 3l-6 6" stroke="#444" stroke-width="2"/></svg>
<div class="t" style="left:1730px;top:163px;font-size:11.8px;color:#111">Processing Toolbox</div>
<svg class="a" style="left:1893px;top:164px" width="26" height="12" viewBox="0 0 26 12"><rect x=".5" y=".5" width="10.5" height="10.5" rx="2" fill="none" stroke="#5a5a5a"/><rect x="2.5" y="4.5" width="4" height="4" fill="none" stroke="#5a5a5a" stroke-width=".9"/><path d="M4.5 4.5v-2h4v4h-2" fill="none" stroke="#5a5a5a" stroke-width=".9"/><rect x="14.5" y=".5" width="10.5" height="10.5" rx="2" fill="none" stroke="#5a5a5a"/><path d="M17 3l6 6M23 3l-6 6" stroke="#444" stroke-width="2"/></svg>
<svg class="a" style="left:9px;top:186px" width="16" height="16" viewBox="0 0 16 16"><rect x="2.5" y="2.5" width="11" height="11" fill="none" stroke="#777"/><circle cx="13.5" cy="13.5" r="2.8" fill="#a9d6a9" stroke="#4f8f4f" stroke-width="1.2"/></svg>
<svg class="a" style="left:34px;top:186px" width="16" height="16" viewBox="0 0 16 16"><path d="M2 7.5a6 6 0 0 1 10.5-3.5l1.5-1.8v5.8H8.2l2-2a3.6 3.6 0 0 0-6 1.5z" fill="#4a86cf"/><path d="M14 8.5a6 6 0 0 1-10.5 3.5L2 13.8V8h5.8l-2 2a3.6 3.6 0 0 0 6-1.5z" fill="#4a86cf"/></svg>
<svg class="a" style="left:59px;top:186px" width="16" height="16" viewBox="0 0 16 16"><path d="M1.5 2.5h13v2l-5 5v6l-3-2v-4l-5-5z" fill="#6d98c9"/><rect x="1.5" y="1.5" width="13" height="2.5" fill="#e4e08a" stroke="#8ea04a" stroke-width=".5"/></svg>
<svg class="a" style="left:84px;top:186px" width="16" height="16" viewBox="0 0 16 16"><path d="M1.5 2h4M2 2v12M2 6h3M2 12h3" stroke="#aaa" stroke-width=".8"/><rect x="4" y="5" width="2.5" height="2.5" fill="#f3a531"/><rect x="4" y="11" width="2.5" height="2.5" fill="#f3a531"/><path d="M11 15V7h3l-4-5-4 5h3v8z" fill="#4f7fb8" stroke="#2c4c74" stroke-width=".7"/></svg>
<svg class="a" style="left:109px;top:186px" width="16" height="16" viewBox="0 0 16 16"><circle cx="8" cy="8" r="7" fill="#6a97cf"/><text x="7.6" y="12" font-size="10" font-weight="bold" font-style="italic" text-anchor="middle" fill="#fff" font-family="Liberation Serif">i</text></svg>
<svg class="a" style="left:9px;top:635px" width="16" height="16" viewBox="0 0 16 16"><path d="M1 10l6-5 6 5-6 4z" fill="#e0563a"/><path d="M2 9l5-4 4 3-5 4z" fill="#f6c342"/><path d="M8 9l7-7" stroke="#f0a030" stroke-width="2"/></svg>
<svg class="a" style="left:34px;top:635px" width="16" height="16" viewBox="0 0 16 16"><rect x="3.5" y="5.5" width="9" height="9" fill="none" stroke="#888"/><rect x="5.5" y="2.5" width="7" height="9" fill="#f4f4f4" stroke="#888"/><path d="M7 4v6M9.5 4v6" stroke="#999" stroke-width=".6"/><circle cx="13" cy="13" r="2.6" fill="#a9d6a9" stroke="#4f8f4f"/></svg>
<svg class="a" style="left:59px;top:635px" width="16" height="16" viewBox="0 0 16 16"><path d="M1 8c3.5-5 10.5-5 14 0c-3.5 5-10.5 5-14 0z" fill="#eef2f6" stroke="#aaa"/><circle cx="8" cy="8" r="3" fill="#5b87c0"/><circle cx="8" cy="8" r="1.2" fill="#123"/><path d="M12 13l2.5 0-1.25 1.5z" fill="#333"/></svg>
<svg class="a" style="left:84px;top:635px" width="16" height="16" viewBox="0 0 16 16"><path d="M1.5 2.5h13v2l-5 5v6l-3-2v-4l-5-5z" fill="#6d98c9"/><rect x="1.5" y="1.5" width="13" height="2.5" fill="#e4e08a" stroke="#8ea04a" stroke-width=".5"/><path d="M12 13l3 0-1.5 1.7z" fill="#333"/></svg>
<svg class="a" style="left:109px;top:635px" width="16" height="16" viewBox="0 0 16 16"><text x="2" y="12" font-size="12" fill="#d6d6d6" font-family="Liberation Serif">ε</text><path d="M9 10v5h5v-5" fill="none" stroke="#d6d6d6"/></svg>
<svg class="a" style="left:147px;top:635px" width="16" height="16" viewBox="0 0 16 16"><path d="M1.5 2h4M2 2v12M2 6h3M2 12h3" stroke="#aaa" stroke-width=".8"/><rect x="4" y="5" width="2.5" height="2.5" fill="#f3a531"/><rect x="4" y="11" width="2.5" height="2.5" fill="#f3a531"/><path d="M11 1v8h3l-4 5-4-5h3V1z" fill="#4f7fb8" stroke="#2c4c74" stroke-width=".7"/></svg>
<svg class="a" style="left:172px;top:635px" width="16" height="16" viewBox="0 0 16 16"><path d="M1.5 2h4M2 2v12M2 6h3M2 12h3" stroke="#aaa" stroke-width=".8"/><rect x="4" y="5" width="2.5" height="2.5" fill="#f3a531"/><rect x="4" y="11" width="2.5" height="2.5" fill="#f3a531"/><path d="M11 15V7h3l-4-5-4 5h3v8z" fill="#4f7fb8" stroke="#2c4c74" stroke-width=".7"/></svg>
<svg class="a" style="left:196px;top:635px" width="16" height="16" viewBox="0 0 16 16"><rect x="2.5" y="2.5" width="11" height="11" fill="none" stroke="#777"/><rect x="10" y="11" width="6" height="4" rx="1.5" fill="#e03030"/><path d="M11.5 13h3" stroke="#fff"/></svg>
<div class="dd" style="left:129.5px;top:640.5px;border-width:5px 4.5px 0 4.5px;border-top-color:#b8b8b8"></div>
<div class="tree" style="left:1px;top:210px;width:614px;height:393px;overflow:hidden"></div>
<div class="a" style="left:600px;top:211px;width:14px;height:391px;background:#e4e4e4;border-left:1px solid #d8d8d8"></div>
<div class="a" style="left:601px;top:225px;width:13px;height:165px;background:#f7f7f7;border:1px solid #d4d4d4;border-right:none"></div>
<div class="a" style="left:601px;top:589px;width:13px;height:13px;background:#f7f7f7;border-top:1px solid #d6d6d6"></div>
<div class="a" style="left:601px;top:211px;width:13px;height:13px;border-bottom:1px solid #d6d6d6"></div>
<div class="arr" style="left:603px;top:214px;border-width:0 4.5px 5px 4.5px;border-color:transparent transparent #444 transparent"></div>
<div class="arr" style="left:603px;top:594px;border-width:5px 4.5px 0 4.5px;border-color:#444 transparent transparent transparent"></div>
<svg class="a" style="left:21px;top:212px" width="16" height="16" viewBox="0 0 16 16"><path d="M8 .8l2.2 4.6 5 .6-3.7 3.4 1 5-4.5-2.5-4.5 2.5 1-5L.8 6l5-.6z" fill="#f7e24a" stroke="#cdb52a" stroke-width=".6"/></svg>
<div class="t" style="left:43px;top:213px">Favorites</div>
<div class="arr ar" style="left:8px;top:233.5px"></div>
<svg class="a" style="left:21px;top:230px" width="16" height="16" viewBox="0 0 16 16"><path d="M2.5 1.5h11v13h-11z" fill="#ececec" stroke="#9a9a9a"/><path d="M8 1v6l1.5-1.5L11 7V1z" fill="#6d98c9"/></svg>
<div class="t" style="left:43px;top:231px">Spatial Bookmarks</div>
<div class="arr ar" style="left:8px;top:251.5px"></div>
<svg class="a" style="left:21px;top:248px" width="16" height="16" viewBox="0 0 16 16"><path d="M1.5 3.5h5l1 1h7v10h-13z" fill="#f4f4f4" stroke="#777"/><path d="M5 11v-3l3-2.5 3 2.5v3z" fill="none" stroke="#333" stroke-width=".9"/></svg>
<div class="t" style="left:43px;top:249px">Home</div>
<div class="arr ar" style="left:8px;top:269.5px"></div>
<svg class="a" style="left:21px;top:266px" width="16" height="16" viewBox="0 0 16 16"><path d="M1.5 2.5h5l1.5 1.5h6.5v10.5h-13z" fill="#f2f2f2" stroke="#8a8a8a"/></svg>
<div class="t" style="left:43px;top:267px">C:\ (OS)</div>
<div class="arr ar" style="left:8px;top:287.5px"></div>
<svg class="a" style="left:21px;top:284px" width="16" height="16" viewBox="0 0 16 16"><path d="M1.5 2.5h5l1.5 1.5h6.5v10.5h-13z" fill="#f2f2f2" stroke="#8a8a8a"/></svg>
<div class="t" style="left:43px;top:285px">D:\ (2TB HDD)</div>
<svg class="a" style="left:21px;top:302px" width="16" height="16" viewBox="0 0 16 16"><path d="M1 6l7 3v6.5L1 12.5z" fill="#d6b51c" stroke="#333" stroke-width=".5"/><path d="M8 9l7-3v6.5L8 15.5z" fill="#efde5c" stroke="#333" stroke-width=".5"/><circle cx="8" cy="5.5" r="4.5" fill="#6d93c9" stroke="#3d5f8f" stroke-width=".5"/></svg>
<div class="t" style="left:43px;top:303px">GeoPackage</div>
<svg class="a" style="left:21px;top:320px" width="16" height="16" viewBox="0 0 16 16"><path d="M1 15.5c1.5-6 6-12 14-15c-1 5-4 10-10 12.5z" fill="#8eaedb" stroke="#4f6f9c" stroke-width=".6"/></svg>
<div class="t" style="left:43px;top:321px">SpatiaLite</div>
<svg class="a" style="left:21px;top:338px" width="16" height="16" viewBox="0 0 16 16"><path d="M3 2c3-2 9-2 11 1c1.5 3 0 6-2 8l1 4h-3l-1-3c-2 0-4-1-5-3c-2-2-3-5-1-7z" fill="#5b83b8" stroke="#2f4f7a" stroke-width=".6"/></svg>
<div class="t" style="left:43px;top:339px">PostgreSQL</div>
<svg class="a" style="left:21px;top:356px" width="16" height="16" viewBox="0 0 16 16"><rect x="2.5" y="2.5" width="11" height="11" fill="#7fa3d6" stroke="#4a6c9c" stroke-dasharray="1.2 1"/></svg>
<div class="t" style="left:43px;top:357px">SAP HANA</div>
<svg class="a" style="left:21px;top:374px" width="16" height="16" viewBox="0 0 16 16"><path d="M1 1c6 1 11 3 14 7c-3 3-8 5-14 7c2-4 3-10 0-14z" fill="#7f9fc9" stroke="#4a6c9c" stroke-width=".6"/></svg>
<div class="t" style="left:43px;top:375px">MS SQL Server</div>
<svg class="a" style="left:21px;top:392px" width="16" height="16" viewBox="0 0 16 16"><rect x="1" y="3" width="14" height="10" rx="5" fill="#6d98c9" stroke="#3d5f8f" stroke-width=".8"/></svg>
<div class="t" style="left:43px;top:393px">Oracle</div>
<div class="arr ad" style="left:5.5px;top:415.5px"></div>
<svg class="a" style="left:21px;top:410px" width="16" height="16" viewBox="0 0 16 16"><circle cx="8" cy="8" r="7" fill="#c4d4e8" stroke="#8ea6c4" stroke-width=".8"/><path d="M4 5c1.5-1 3 .5 3 2s-2 1-2 3M9 3c1 1 3 0 4 2s-1 3-1 5M8 11c1 0 2 1 2 3" fill="none" stroke="#3c5474" stroke-width="1.3"/></svg>
<div class="t" style="left:43px;top:411px">WMS/WMTS</div>
<div class="arr ad" style="left:21.5px;top:433.5px"></div>
<svg class="a" style="left:37px;top:428px" width="16" height="16" viewBox="0 0 16 16"><path d="M2 8h6M9 3L4 8l5 5" fill="none" stroke="#c88a12" stroke-width="1.8"/></svg>
<div class="t" style="left:59px;top:429px">Historical Mosaics</div>
<div class="arr ad" style="left:37.5px;top:451.5px"></div>
<svg class="a" style="left:53px;top:446px" width="16" height="16" viewBox="0 0 16 16"><circle cx="8" cy="8" r="7" fill="#c4d4e8" stroke="#8ea6c4" stroke-width=".8"/><path d="M4 5c1.5-1 3 .5 3 2s-2 1-2 3M9 3c1 1 3 0 4 2s-1 3-1 5M8 11c1 0 2 1 2 3" fill="none" stroke="#3c5474" stroke-width="1.3"/></svg>
<div class="a" style="left:2px;top:463px;width:231px;height:18px;background:#0a64d2"></div>
<svg class="a" style="left:69px;top:464px" width="16" height="16" viewBox="0 0 16 16"><rect x="1" y="1" width="14" height="14" fill="#c9d6e6"/><rect x="1" y="1" width="4.7" height="4.7" fill="#1f2a3a"/><rect x="10.3" y="1" width="4.7" height="4.7" fill="#1f2a3a"/><rect x="5.7" y="5.7" width="4.7" height="4.7" fill="#1f2a3a"/><rect x="1" y="10.3" width="4.7" height="4.7" fill="#1f2a3a"/><rect x="5.7" y="1" width="4.7" height="4.7" fill="#e8eef6"/><rect x="10.3" y="10.3" width="4.7" height="4.7" fill="#e8eef6"/></svg>
<div class="t" style="left:91px;top:465px;color:#fff">AlaMoana_1968</div>
<svg class="a" style="left:69px;top:482px" width="16" height="16" viewBox="0 0 16 16"><rect x="1" y="1" width="14" height="14" fill="#c9d6e6"/><rect x="1" y="1" width="4.7" height="4.7" fill="#1f2a3a"/><rect x="10.3" y="1" width="4.7" height="4.7" fill="#1f2a3a"/><rect x="5.7" y="5.7" width="4.7" height="4.7" fill="#1f2a3a"/><rect x="1" y="10.3" width="4.7" height="4.7" fill="#1f2a3a"/><rect x="5.7" y="1" width="4.7" height="4.7" fill="#e8eef6"/><rect x="10.3" y="10.3" width="4.7" height="4.7" fill="#e8eef6"/></svg>
<div class="t" style="left:91px;top:483px">DiamondHead_1949</div>
<svg class="a" style="left:69px;top:500px" width="16" height="16" viewBox="0 0 16 16"><rect x="1" y="1" width="14" height="14" fill="#c9d6e6"/><rect x="1" y="1" width="4.7" height="4.7" fill="#1f2a3a"/><rect x="10.3" y="1" width="4.7" height="4.7" fill="#1f2a3a"/><rect x="5.7" y="5.7" width="4.7" height="4.7" fill="#1f2a3a"/><rect x="1" y="10.3" width="4.7" height="4.7" fill="#1f2a3a"/><rect x="5.7" y="1" width="4.7" height="4.7" fill="#e8eef6"/><rect x="10.3" y="10.3" width="4.7" height="4.7" fill="#e8eef6"/></svg>
<div class="t" style="left:91px;top:501px">DiamondHead_1957</div>
<svg class="a" style="left:69px;top:518px" width="16" height="16" viewBox="0 0 16 16"><rect x="1" y="1" width="14" height="14" fill="#c9d6e6"/><rect x="1" y="1" width="4.7" height="4.7" fill="#1f2a3a"/><rect x="10.3" y="1" width="4.7" height="4.7" fill="#1f2a3a"/><rect x="5.7" y="5.7" width="4.7" height="4.7" fill="#1f2a3a"/><rect x="1" y="10.3" width="4.7" height="4.7" fill="#1f2a3a"/><rect x="5.7" y="1" width="4.7" height="4.7" fill="#e8eef6"/><rect x="10.3" y="10.3" width="4.7" height="4.7" fill="#e8eef6"/></svg>
<div class="t" style="left:91px;top:519px">DiamondHead_1970</div>
<svg class="a" style="left:69px;top:536px" width="16" height="16" viewBox="0 0 16 16"><rect x="1" y="1" width="14" height="14" fill="#c9d6e6"/><rect x="1" y="1" width="4.7" height="4.7" fill="#1f2a3a"/><rect x="10.3" y="1" width="4.7" height="4.7" fill="#1f2a3a"/><rect x="5.7" y="5.7" width="4.7" height="4.7" fill="#1f2a3a"/><rect x="1" y="10.3" width="4.7" height="4.7" fill="#1f2a3a"/><rect x="5.7" y="1" width="4.7" height="4.7" fill="#e8eef6"/><rect x="10.3" y="10.3" width="4.7" height="4.7" fill="#e8eef6"/></svg>
<div class="t" style="left:91px;top:537px">DiamondHead_1971</div>
<svg class="a" style="left:69px;top:554px" width="16" height="16" viewBox="0 0 16 16"><rect x="1" y="1" width="14" height="14" fill="#c9d6e6"/><rect x="1" y="1" width="4.7" height="4.7" fill="#1f2a3a"/><rect x="10.3" y="1" width="4.7" height="4.7" fill="#1f2a3a"/><rect x="5.7" y="5.7" width="4.7" height="4.7" fill="#1f2a3a"/><rect x="1" y="10.3" width="4.7" height="4.7" fill="#1f2a3a"/><rect x="5.7" y="1" width="4.7" height="4.7" fill="#e8eef6"/><rect x="10.3" y="10.3" width="4.7" height="4.7" fill="#e8eef6"/></svg>
<div class="t" style="left:91px;top:555px">DiamondHead_1975</div>
<svg class="a" style="left:69px;top:572px" width="16" height="16" viewBox="0 0 16 16"><rect x="1" y="1" width="14" height="14" fill="#c9d6e6"/><rect x="1" y="1" width="4.7" height="4.7" fill="#1f2a3a"/><rect x="10.3" y="1" width="4.7" height="4.7" fill="#1f2a3a"/><rect x="5.7" y="5.7" width="4.7" height="4.7" fill="#1f2a3a"/><rect x="1" y="10.3" width="4.7" height="4.7" fill="#1f2a3a"/><rect x="5.7" y="1" width="4.7" height="4.7" fill="#e8eef6"/><rect x="10.3" y="10.3" width="4.7" height="4.7" fill="#e8eef6"/></svg>
<div class="t" style="left:91px;top:573px">DiamondHead_1988</div>
<svg class="a" style="left:69px;top:590px" width="16" height="16" viewBox="0 0 16 16"><rect x="1" y="1" width="14" height="14" fill="#c9d6e6"/><rect x="1" y="1" width="4.7" height="4.7" fill="#1f2a3a"/><rect x="10.3" y="1" width="4.7" height="4.7" fill="#1f2a3a"/><rect x="5.7" y="5.7" width="4.7" height="4.7" fill="#1f2a3a"/><rect x="1" y="10.3" width="4.7" height="4.7" fill="#1f2a3a"/><rect x="5.7" y="1" width="4.7" height="4.7" fill="#e8eef6"/><rect x="10.3" y="10.3" width="4.7" height="4.7" fill="#e8eef6"/></svg>
<div class="t" style="left:91px;top:591px">Honolulu_Waikiki_2015_v2</div>
<div class="a" style="left:3px;top:602px;width:597px;height:6px;background:#f0f0f0;border-top:1px solid #acacac"></div>
<div class="a" style="left:290px;top:603px;width:30px;height:2px;background-image:radial-gradient(circle,#aaa .6px,transparent .9px);background-size:3px 3px"></div>
<div class="tree" style="left:1px;top:659px;width:614px;height:393px"></div>
<div class="arr ad" style="left:8px;top:666.5px"></div>
<div class="a" style="left:25px;top:662px;width:14px;height:14px;border:1px solid #8a8a8a;background:#fff"></div>
<svg class="a" style="left:26px;top:663px" width="12" height="12" viewBox="0 0 12 12"><path d="M2.5 6l2.5 3.5 5-7.5" fill="none" stroke="#111" stroke-width="1.6"/></svg>
<svg class="a" style="left:46px;top:661px" width="16" height="16" viewBox="0 0 16 16"><rect x="1" y="1" width="14" height="14" fill="#c9d6e6"/><rect x="1" y="1" width="4.7" height="4.7" fill="#1f2a3a"/><rect x="10.3" y="1" width="4.7" height="4.7" fill="#1f2a3a"/><rect x="5.7" y="5.7" width="4.7" height="4.7" fill="#1f2a3a"/><rect x="1" y="10.3" width="4.7" height="4.7" fill="#1f2a3a"/><rect x="5.7" y="1" width="4.7" height="4.7" fill="#e8eef6"/><rect x="10.3" y="10.3" width="4.7" height="4.7" fill="#e8eef6"/></svg>
<div class="t" style="left:67px;top:662px;font-weight:bold;text-decoration:underline;font-size:11.3px">AlaMoana_1968</div>
<div class="arr ad" style="left:8px;top:704.5px"></div>
<div class="a" style="left:25px;top:700px;width:14px;height:14px;border:1px solid #8a8a8a;background:#fff"></div>
<svg class="a" style="left:26px;top:701px" width="12" height="12" viewBox="0 0 12 12"><path d="M2.5 6l2.5 3.5 5-7.5" fill="none" stroke="#111" stroke-width="1.6"/></svg>
<svg class="a" style="left:46px;top:699px" width="16" height="16" viewBox="0 0 16 16"><rect x="1" y="1" width="14" height="14" fill="#c9d6e6"/><rect x="1" y="1" width="4.7" height="4.7" fill="#1f2a3a"/><rect x="10.3" y="1" width="4.7" height="4.7" fill="#1f2a3a"/><rect x="5.7" y="5.7" width="4.7" height="4.7" fill="#1f2a3a"/><rect x="1" y="10.3" width="4.7" height="4.7" fill="#1f2a3a"/><rect x="5.7" y="1" width="4.7" height="4.7" fill="#e8eef6"/><rect x="10.3" y="10.3" width="4.7" height="4.7" fill="#e8eef6"/></svg>
<div class="t" style="left:67px;top:700px;font-weight:bold;font-size:11.3px">OSM Standard</div>
<div class="a" style="left:45px;top:678px;width:20px;height:20px;border:1.5px solid #1f1fd8;background-color:#8a8af0;background-image:linear-gradient(45deg,#5a5ae6 25%,transparent 25%,transparent 75%,#5a5ae6 75%),linear-gradient(45deg,#5a5ae6 25%,transparent 25%,transparent 75%,#5a5ae6 75%);background-size:4px 4px;background-position:0 0,2px 2px"></div>
<svg class="a" style="left:1733px;top:186px" width="16" height="16" viewBox="0 0 16 16"><g transform="translate(6 6)"><rect x="-1" y="-5.5" width="2" height="3" fill="#e02020" transform="rotate(0)"/><rect x="-1" y="-5.5" width="2" height="3" fill="#e02020" transform="rotate(45)"/><rect x="-1" y="-5.5" width="2" height="3" fill="#e02020" transform="rotate(90)"/><rect x="-1" y="-5.5" width="2" height="3" fill="#e02020" transform="rotate(135)"/><rect x="-1" y="-5.5" width="2" height="3" fill="#e02020" transform="rotate(180)"/><rect x="-1" y="-5.5" width="2" height="3" fill="#e02020" transform="rotate(225)"/><rect x="-1" y="-5.5" width="2" height="3" fill="#e02020" transform="rotate(270)"/><rect x="-1" y="-5.5" width="2" height="3" fill="#e02020" transform="rotate(315)"/><circle r="3.5" fill="#e02020"/></g><g transform="translate(11.5 10.5)"><rect x="-.8" y="-4" width="1.6" height="2" fill="#8a8a8a" transform="rotate(0)"/><rect x="-.8" y="-4" width="1.6" height="2" fill="#8a8a8a" transform="rotate(45)"/><rect x="-.8" y="-4" width="1.6" height="2" fill="#8a8a8a" transform="rotate(90)"/><rect x="-.8" y="-4" width="1.6" height="2" fill="#8a8a8a" transform="rotate(135)"/><rect x="-.8" y="-4" width="1.6" height="2" fill="#8a8a8a" transform="rotate(180)"/><rect x="-.8" y="-4" width="1.6" height="2" fill="#8a8a8a" transform="rotate(225)"/><rect x="-.8" y="-4" width="1.6" height="2" fill="#8a8a8a" transform="rotate(270)"/><rect x="-.8" y="-4" width="1.6" height="2" fill="#8a8a8a" transform="rotate(315)"/><circle r="2.6" fill="#8a8a8a"/></g><circle cx="7" cy="13" r="2" fill="#8fb0e0"/></svg>
<div class="dd" style="left:1744px;top:198.5px;border-width:4px 3px 0 3px;border-top-color:#444"></div>
<svg class="a" style="left:1758px;top:186px" width="16" height="16" viewBox="0 0 24 24"><path d="M11 1.5c-4.5 0-5 2-5 3.5V8h5.5v1H4C2 9 1 11 1 14s1.2 5 3 5h2.2v-3c0-2 1.5-3.5 3.5-3.5h5.5c1.5 0 3-1.2 3-3V4.5C18.2 2.8 16.5 1.5 11 1.5z" fill="#3d73b0"/><circle cx="8.3" cy="4.2" r="1" fill="#fff"/><path d="M12 22c4.5 0 5-2 5-3.5V15.5h-5.5v-1H19c2 0 3-2 3-5s-1.2-5-3-5h-2.2v3c0 2-1.5 3.5-3.5 3.5H7.8c-1.5 0-3 1.2-3 3V19c0 1.7 1.7 3 7.2 3z" fill="#f6d141"/><path d="M14 17.5l5 2.5-5 2.5" fill="none" stroke="#444" stroke-width="1"/></svg>
<div class="dd" style="left:1769px;top:198.5px;border-width:4px 3px 0 3px;border-top-color:#444"></div>
<svg class="a" style="left:1783px;top:186px" width="16" height="16" viewBox="0 0 16 16"><circle cx="8" cy="8" r="6.8" fill="#f6f6f6" stroke="#888" stroke-width="1.1"/><path d="M8 3.5V8l2.5 2.5" fill="none" stroke="#888" stroke-width="1.1"/></svg>
<svg class="a" style="left:1808px;top:186px" width="16" height="16" viewBox="0 0 16 16"><path d="M3.5 1.5h6l3 3v10h-9z" fill="#f4f4f4" stroke="#c8c8c8"/><path d="M5 6h5M5 8.5h5M5 11h5" stroke="#c8c8c8"/></svg>
<div class="sep" style="left:1833px;top:186.0px;height:16px"></div>
<svg class="a" style="left:1839px;top:186px" width="16" height="16" viewBox="0 0 16 16"><path d="M2 3h9l3 4-3 4H6v3l-3-3H2z" fill="#dedede"/></svg>
<div class="sep" style="left:1865px;top:186.0px;height:16px"></div>
<svg class="a" style="left:1872px;top:186px" width="16" height="16" viewBox="0 0 16 16"><path d="M7 7l7.5 7.5" stroke="#5f5a35" stroke-width="3.6" stroke-linecap="round"/><path d="M7 7l7.5 7.5" stroke="#ecd66c" stroke-width="2.2" stroke-linecap="round"/><path d="M3 1.5a3.4 3.4 0 1 0 4.8 4.1l-1.6-.4-.8-1.7 1-1.4z" fill="#dadada" stroke="#6f6f6f" stroke-width=".8"/></svg>
<div class="a" style="left:1726px;top:212px;width:195px;height:21px;background:#fff;border:1px solid #b8b8b8;border-radius:2px"></div>
<svg class="a" style="left:1733px;top:215px" width="14" height="14" viewBox="0 0 14 14"><circle cx="5.5" cy="5.5" r="4" fill="none" stroke="#555" stroke-width="1.1"/><path d="M8.5 8.5l4 4" stroke="#555" stroke-width="1.2"/></svg>
<div class="t" style="left:1753px;top:215px;color:#6d6d6d">Search...</div>
<div class="tree" style="left:1726px;top:233px;width:195px;height:819px;border-right:none"></div>
<div class="arr ar" style="left:1734px;top:237.5px"></div>
<svg class="a" style="left:1749px;top:234px" width="16" height="16" viewBox="0 0 16 16"><circle cx="8" cy="8" r="6.8" fill="#f6f6f6" stroke="#999" stroke-width="1.1"/><path d="M8 3.5V8l2.5 2.5" fill="none" stroke="#999" stroke-width="1.1"/></svg>
<div class="t" style="left:1771px;top:235px">Recently used</div>
<div class="arr ar" style="left:1734px;top:255.5px"></div>
<svg class="a" style="left:1749px;top:252px" width="16" height="16" viewBox="0 0 16 16"><circle cx="7.5" cy="7.5" r="5.3" fill="none" stroke="#6d9d33" stroke-width="2.8"/><path d="M9 9.5L14 14.5" stroke="#6d9d33" stroke-width="3"/><circle cx="7.5" cy="7.5" r="1.4" fill="#ef7d1a"/></svg>
<div class="t" style="left:1771px;top:253px">3D Tiles</div>
<div class="arr ar" style="left:1734px;top:273.5px"></div>
<svg class="a" style="left:1749px;top:270px" width="16" height="16" viewBox="0 0 16 16"><circle cx="7.5" cy="7.5" r="5.3" fill="none" stroke="#6d9d33" stroke-width="2.8"/><path d="M9 9.5L14 14.5" stroke="#6d9d33" stroke-width="3"/><circle cx="7.5" cy="7.5" r="1.4" fill="#ef7d1a"/></svg>
<div class="t" style="left:1771px;top:271px">Cartography</div>
<div class="arr ar" style="left:1734px;top:291.5px"></div>
<svg class="a" style="left:1749px;top:288px" width="16" height="16" viewBox="0 0 16 16"><circle cx="7.5" cy="7.5" r="5.3" fill="none" stroke="#6d9d33" stroke-width="2.8"/><path d="M9 9.5L14 14.5" stroke="#6d9d33" stroke-width="3"/><circle cx="7.5" cy="7.5" r="1.4" fill="#ef7d1a"/></svg>
<div class="t" style="left:1771px;top:289px">Database</div>
<div class="arr ar" style="left:1734px;top:309.5px"></div>
<svg class="a" style="left:1749px;top:306px" width="16" height="16" viewBox="0 0 16 16"><circle cx="7.5" cy="7.5" r="5.3" fill="none" stroke="#6d9d33" stroke-width="2.8"/><path d="M9 9.5L14 14.5" stroke="#6d9d33" stroke-width="3"/><circle cx="7.5" cy="7.5" r="1.4" fill="#ef7d1a"/></svg>
<div class="t" style="left:1771px;top:307px">File tools</div>
<div class="arr ar" style="left:1734px;top:327.5px"></div>
<svg class="a" style="left:1749px;top:324px" width="16" height="16" viewBox="0 0 16 16"><circle cx="7.5" cy="7.5" r="5.3" fill="none" stroke="#6d9d33" stroke-width="2.8"/><path d="M9 9.5L14 14.5" stroke="#6d9d33" stroke-width="3"/><circle cx="7.5" cy="7.5" r="1.4" fill="#ef7d1a"/></svg>
<div class="t" style="left:1771px;top:325px">GPS</div>
<div class="arr ar" style="left:1734px;top:345.5px"></div>
<svg class="a" style="left:1749px;top:342px" width="16" height="16" viewBox="0 0 16 16"><circle cx="7.5" cy="7.5" r="5.3" fill="none" stroke="#6d9d33" stroke-width="2.8"/><path d="M9 9.5L14 14.5" stroke="#6d9d33" stroke-width="3"/><circle cx="7.5" cy="7.5" r="1.4" fill="#ef7d1a"/></svg>
<div class="t" style="left:1771px;top:343px">Interpolation</div>
<div class="arr ar" style="left:1734px;top:363.5px"></div>
<svg class="a" style="left:1749px;top:360px" width="16" height="16" viewBox="0 0 16 16"><circle cx="7.5" cy="7.5" r="5.3" fill="none" stroke="#6d9d33" stroke-width="2.8"/><path d="M9 9.5L14 14.5" stroke="#6d9d33" stroke-width="3"/><circle cx="7.5" cy="7.5" r="1.4" fill="#ef7d1a"/></svg>
<div class="t" style="left:1771px;top:361px">Layer tools</div>
<div class="arr ar" style="left:1734px;top:381.5px"></div>
<svg class="a" style="left:1749px;top:378px" width="16" height="16" viewBox="0 0 16 16"><circle cx="7.5" cy="7.5" r="5.3" fill="none" stroke="#6d9d33" stroke-width="2.8"/><path d="M9 9.5L14 14.5" stroke="#6d9d33" stroke-width="3"/><circle cx="7.5" cy="7.5" r="1.4" fill="#ef7d1a"/></svg>
<div class="t" style="left:1771px;top:379px">Mesh</div>
<div class="arr ar" style="left:1734px;top:399.5px"></div>
<svg class="a" style="left:1749px;top:396px" width="16" height="16" viewBox="0 0 16 16"><circle cx="7.5" cy="7.5" r="5.3" fill="none" stroke="#6d9d33" stroke-width="2.8"/><path d="M9 9.5L14 14.5" stroke="#6d9d33" stroke-width="3"/><circle cx="7.5" cy="7.5" r="1.4" fill="#ef7d1a"/></svg>
<div class="t" style="left:1771px;top:397px">Network analysis</div>
<div class="arr ar" style="left:1734px;top:417.5px"></div>
<svg class="a" style="left:1749px;top:414px" width="16" height="16" viewBox="0 0 16 16"><circle cx="7.5" cy="7.5" r="5.3" fill="none" stroke="#6d9d33" stroke-width="2.8"/><path d="M9 9.5L14 14.5" stroke="#6d9d33" stroke-width="3"/><circle cx="7.5" cy="7.5" r="1.4" fill="#ef7d1a"/></svg>
<div class="t" style="left:1771px;top:415px">Plots</div>
<div class="arr ar" style="left:1734px;top:435.5px"></div>
<svg class="a" style="left:1749px;top:432px" width="16" height="16" viewBox="0 0 16 16"><circle cx="7.5" cy="7.5" r="5.3" fill="none" stroke="#6d9d33" stroke-width="2.8"/><path d="M9 9.5L14 14.5" stroke="#6d9d33" stroke-width="3"/><circle cx="7.5" cy="7.5" r="1.4" fill="#ef7d1a"/></svg>
<div class="t" style="left:1771px;top:433px">Point cloud conversion</div>
<div class="arr ar" style="left:1734px;top:453.5px"></div>
<svg class="a" style="left:1749px;top:450px" width="16" height="16" viewBox="0 0 16 16"><circle cx="7.5" cy="7.5" r="5.3" fill="none" stroke="#6d9d33" stroke-width="2.8"/><path d="M9 9.5L14 14.5" stroke="#6d9d33" stroke-width="3"/><circle cx="7.5" cy="7.5" r="1.4" fill="#ef7d1a"/></svg>
<div class="t" style="left:1771px;top:451px">Point cloud data manage...</div>
<div class="arr ar" style="left:1734px;top:471.5px"></div>
<svg class="a" style="left:1749px;top:468px" width="16" height="16" viewBox="0 0 16 16"><circle cx="7.5" cy="7.5" r="5.3" fill="none" stroke="#6d9d33" stroke-width="2.8"/><path d="M9 9.5L14 14.5" stroke="#6d9d33" stroke-width="3"/><circle cx="7.5" cy="7.5" r="1.4" fill="#ef7d1a"/></svg>
<div class="t" style="left:1771px;top:469px">Point cloud extraction</div>
<div class="arr ar" style="left:1734px;top:489.5px"></div>
<svg class="a" style="left:1749px;top:486px" width="16" height="16" viewBox="0 0 16 16"><circle cx="7.5" cy="7.5" r="5.3" fill="none" stroke="#6d9d33" stroke-width="2.8"/><path d="M9 9.5L14 14.5" stroke="#6d9d33" stroke-width="3"/><circle cx="7.5" cy="7.5" r="1.4" fill="#ef7d1a"/></svg>
<div class="t" style="left:1771px;top:487px">Raster analysis</div>
<div class="arr ar" style="left:1734px;top:507.5px"></div>
<svg class="a" style="left:1749px;top:504px" width="16" height="16" viewBox="0 0 16 16"><circle cx="7.5" cy="7.5" r="5.3" fill="none" stroke="#6d9d33" stroke-width="2.8"/><path d="M9 9.5L14 14.5" stroke="#6d9d33" stroke-width="3"/><circle cx="7.5" cy="7.5" r="1.4" fill="#ef7d1a"/></svg>
<div class="t" style="left:1771px;top:505px">Raster creation</div>
<div class="arr ar" style="left:1734px;top:525.5px"></div>
<svg class="a" style="left:1749px;top:522px" width="16" height="16" viewBox="0 0 16 16"><circle cx="7.5" cy="7.5" r="5.3" fill="none" stroke="#6d9d33" stroke-width="2.8"/><path d="M9 9.5L14 14.5" stroke="#6d9d33" stroke-width="3"/><circle cx="7.5" cy="7.5" r="1.4" fill="#ef7d1a"/></svg>
<div class="t" style="left:1771px;top:523px">Raster terrain analysis</div>
<div class="arr ar" style="left:1734px;top:543.5px"></div>
<svg class="a" style="left:1749px;top:540px" width="16" height="16" viewBox="0 0 16 16"><circle cx="7.5" cy="7.5" r="5.3" fill="none" stroke="#6d9d33" stroke-width="2.8"/><path d="M9 9.5L14 14.5" stroke="#6d9d33" stroke-width="3"/><circle cx="7.5" cy="7.5" r="1.4" fill="#ef7d1a"/></svg>
<div class="t" style="left:1771px;top:541px">Raster tools</div>
<div class="arr ar" style="left:1734px;top:561.5px"></div>
<svg class="a" style="left:1749px;top:558px" width="16" height="16" viewBox="0 0 16 16"><circle cx="7.5" cy="7.5" r="5.3" fill="none" stroke="#6d9d33" stroke-width="2.8"/><path d="M9 9.5L14 14.5" stroke="#6d9d33" stroke-width="3"/><circle cx="7.5" cy="7.5" r="1.4" fill="#ef7d1a"/></svg>
<div class="t" style="left:1771px;top:559px">Vector analysis</div>
<div class="arr ar" style="left:1734px;top:579.5px"></div>
<svg class="a" style="left:1749px;top:576px" width="16" height="16" viewBox="0 0 16 16"><circle cx="7.5" cy="7.5" r="5.3" fill="none" stroke="#6d9d33" stroke-width="2.8"/><path d="M9 9.5L14 14.5" stroke="#6d9d33" stroke-width="3"/><circle cx="7.5" cy="7.5" r="1.4" fill="#ef7d1a"/></svg>
<div class="t" style="left:1771px;top:577px">Vector coverage</div>
<div class="arr ar" style="left:1734px;top:597.5px"></div>
<svg class="a" style="left:1749px;top:594px" width="16" height="16" viewBox="0 0 16 16"><circle cx="7.5" cy="7.5" r="5.3" fill="none" stroke="#6d9d33" stroke-width="2.8"/><path d="M9 9.5L14 14.5" stroke="#6d9d33" stroke-width="3"/><circle cx="7.5" cy="7.5" r="1.4" fill="#ef7d1a"/></svg>
<div class="t" style="left:1771px;top:595px">Vector creation</div>
<div class="arr ar" style="left:1734px;top:615.5px"></div>
<svg class="a" style="left:1749px;top:612px" width="16" height="16" viewBox="0 0 16 16"><circle cx="7.5" cy="7.5" r="5.3" fill="none" stroke="#6d9d33" stroke-width="2.8"/><path d="M9 9.5L14 14.5" stroke="#6d9d33" stroke-width="3"/><circle cx="7.5" cy="7.5" r="1.4" fill="#ef7d1a"/></svg>
<div class="t" style="left:1771px;top:613px">Vector general</div>
<div class="arr ar" style="left:1734px;top:633.5px"></div>
<svg class="a" style="left:1749px;top:630px" width="16" height="16" viewBox="0 0 16 16"><circle cx="7.5" cy="7.5" r="5.3" fill="none" stroke="#6d9d33" stroke-width="2.8"/><path d="M9 9.5L14 14.5" stroke="#6d9d33" stroke-width="3"/><circle cx="7.5" cy="7.5" r="1.4" fill="#ef7d1a"/></svg>
<div class="t" style="left:1771px;top:631px">Vector geometry</div>
<div class="arr ar" style="left:1734px;top:651.5px"></div>
<svg class="a" style="left:1749px;top:648px" width="16" height="16" viewBox="0 0 16 16"><circle cx="7.5" cy="7.5" r="5.3" fill="none" stroke="#6d9d33" stroke-width="2.8"/><path d="M9 9.5L14 14.5" stroke="#6d9d33" stroke-width="3"/><circle cx="7.5" cy="7.5" r="1.4" fill="#ef7d1a"/></svg>
<div class="t" style="left:1771px;top:649px">Vector overlay</div>
<div class="arr ar" style="left:1734px;top:669.5px"></div>
<svg class="a" style="left:1749px;top:666px" width="16" height="16" viewBox="0 0 16 16"><circle cx="7.5" cy="7.5" r="5.3" fill="none" stroke="#6d9d33" stroke-width="2.8"/><path d="M9 9.5L14 14.5" stroke="#6d9d33" stroke-width="3"/><circle cx="7.5" cy="7.5" r="1.4" fill="#ef7d1a"/></svg>
<div class="t" style="left:1771px;top:667px">Vector selection</div>
<div class="arr ar" style="left:1734px;top:687.5px"></div>
<svg class="a" style="left:1749px;top:684px" width="16" height="16" viewBox="0 0 16 16"><circle cx="7.5" cy="7.5" r="5.3" fill="none" stroke="#6d9d33" stroke-width="2.8"/><path d="M9 9.5L14 14.5" stroke="#6d9d33" stroke-width="3"/><circle cx="7.5" cy="7.5" r="1.4" fill="#ef7d1a"/></svg>
<div class="t" style="left:1771px;top:685px">Vector table</div>
<div class="arr ar" style="left:1734px;top:705.5px"></div>
<svg class="a" style="left:1749px;top:702px" width="16" height="16" viewBox="0 0 16 16"><circle cx="7.5" cy="7.5" r="5.3" fill="none" stroke="#6d9d33" stroke-width="2.8"/><path d="M9 9.5L14 14.5" stroke="#6d9d33" stroke-width="3"/><circle cx="7.5" cy="7.5" r="1.4" fill="#ef7d1a"/></svg>
<div class="t" style="left:1771px;top:703px">Vector tiles</div>
<div class="arr ar" style="left:1734px;top:723.5px"></div>
<svg class="a" style="left:1749px;top:720px" width="16" height="16" viewBox="0 0 16 16"><circle cx="9" cy="7" r="5.5" fill="#5aa0d8"/><path d="M2 2l6 4" stroke="#333" stroke-width="1"/><text x="8" y="15.5" font-size="6.5" font-weight="bold" text-anchor="middle" fill="#111" font-family="Liberation Sans">GDAL</text></svg>
<div class="t" style="left:1771px;top:721px">GDAL</div>
<div class="arr ar" style="left:1734px;top:741.5px"></div>
<svg class="a" style="left:1749px;top:738px" width="16" height="16" viewBox="0 0 16 16"><path d="M8 1l7 7-7 7-7-7z" fill="#f2f2f2" stroke="#777" stroke-width=".7"/><path d="M4 7l4 6 4-6M6 6l2 4 2-4" fill="none" stroke="#4a9a3a" stroke-width="1.3"/></svg>
<div class="t" style="left:1771px;top:739px">GRASS</div>
<div class="a" style="left:621px;top:160px;width:1098px;height:892px;border:1px solid #a0a0a0;overflow:hidden;background:#aad3df">
<svg class="a" style="left:0;top:0" width="1096" height="890" viewBox="622 161 1096 890">
<defs>
<pattern id="blk" width="64" height="46" patternUnits="userSpaceOnUse" patternTransform="rotate(22)">
 <rect width="64" height="46" fill="#ece9e5"/>
 <rect x="2" y="2" width="9" height="7" fill="#d9d2cc"/><rect x="13" y="2" width="6" height="9" fill="#dcd5cf"/><rect x="21" y="3" width="8" height="5" fill="#d8d1cb"/>
 <rect x="3" y="12" width="7" height="7" fill="#dad3cd"/><rect x="14" y="14" width="12" height="6" fill="#d9d2cc"/>
 <rect x="36" y="2" width="11" height="8" fill="#d9d2cc"/><rect x="50" y="3" width="9" height="6" fill="#dcd5cf"/><rect x="38" y="13" width="7" height="6" fill="#dad3cd"/><rect x="48" y="12" width="10" height="8" fill="#d8d1cb"/>
 <rect x="2" y="26" width="12" height="6" fill="#d9d2cc"/><rect x="17" y="25" width="7" height="8" fill="#dcd5cf"/><rect x="4" y="35" width="8" height="6" fill="#dad3cd"/><rect x="16" y="36" width="10" height="5" fill="#d9d2cc"/>
 <rect x="36" y="25" width="8" height="7" fill="#dad3cd"/><rect x="47" y="26" width="12" height="6" fill="#d9d2cc"/><rect x="37" y="35" width="12" height="6" fill="#d8d1cb"/><rect x="52" y="35" width="7" height="7" fill="#dcd5cf"/>
 <path d="M0 22.5h64M0 44.5h64M31.5 0v46M62.5 0v46" stroke="#fcfbfa" stroke-width="2.6"/>
</pattern>
<pattern id="blk2" width="40" height="34" patternUnits="userSpaceOnUse" patternTransform="rotate(-28)">
 <rect width="40" height="34" fill="#ebe8e5"/>
 <rect x="2" y="2" width="6" height="5" fill="#d9d2cc"/><rect x="11" y="3" width="5" height="5" fill="#dbd4ce"/><rect x="3" y="10" width="5" height="5" fill="#dad3cd"/><rect x="11" y="11" width="6" height="4" fill="#d8d1cb"/>
 <rect x="22" y="2" width="6" height="5" fill="#d9d2cc"/><rect x="31" y="3" width="5" height="6" fill="#dbd4ce"/><rect x="23" y="11" width="5" height="4" fill="#dad3cd"/>
 <rect x="3" y="20" width="6" height="5" fill="#d9d2cc"/><rect x="12" y="21" width="5" height="5" fill="#dbd4ce"/><rect x="22" y="20" width="6" height="6" fill="#d8d1cb"/><rect x="31" y="21" width="5" height="5" fill="#dad3cd"/><rect x="4" y="28" width="5" height="3" fill="#dad3cd"/>
 <path d="M0 17.5h40M0 33h40M19.5 0v34M39 0v34" stroke="#fbfaf8" stroke-width="2.2"/>
</pattern>
<pattern id="blkA" width="58" height="44" patternUnits="userSpaceOnUse" patternTransform="rotate(-36)">
 <rect width="58" height="44" fill="#e9e6e2"/>
 <rect x="2" y="2" width="14" height="10" fill="#d8d1cb"/><rect x="18" y="2" width="10" height="16" fill="#dad3cd"/><rect x="3" y="14" width="12" height="6" fill="#d9d2cc"/>
 <rect x="31" y="2" width="9" height="9" fill="#d9d2cc"/><rect x="42" y="3" width="11" height="15" fill="#d7d0ca"/><rect x="31" y="13" width="9" height="6" fill="#dcd5cf"/>
 <rect x="2" y="25" width="10" height="14" fill="#d9d2cc"/><rect x="14" y="25" width="14" height="8" fill="#d7d0ca"/><rect x="15" y="35" width="12" height="5" fill="#dad3cd"/>
 <rect x="31" y="24" width="13" height="9" fill="#d8d1cb"/><rect x="46" y="25" width="8" height="14" fill="#dcd5cf"/><rect x="32" y="35" width="11" height="5" fill="#d9d2cc"/>
 <path d="M0 21.5h58M0 42h58M29.5 0v44M56 0v44" stroke="#fdfcfb" stroke-width="3.6"/>
</pattern>
<pattern id="park" width="10" height="10" patternUnits="userSpaceOnUse"><rect width="10" height="10" fill="#c9f1cc"/></pattern>
<filter id="noise" x="0" y="0" width="100%" height="100%"><feTurbulence type="fractalNoise" baseFrequency="0.55" numOctaves="2" seed="3"/><feColorMatrix type="matrix" values="0 0 0 0 0  0 0 0 0 0  0 0 0 0 0  0 0 0 -2.2 1.25"/><feComposite in2="SourceGraphic" operator="in"/></filter>
<filter id="noise2" x="0" y="0" width="100%" height="100%"><feTurbulence type="fractalNoise" baseFrequency="0.35" numOctaves="2" seed="11"/><feColorMatrix type="matrix" values="0 0 0 0 0  0 0 0 0 0  0 0 0 0 0  0 0 0 -2.4 1.3"/><feComposite in2="SourceGraphic" operator="in"/></filter>
<filter id="tex" x="0" y="0" width="100%" height="100%"><feTurbulence type="fractalNoise" baseFrequency="0.35" numOctaves="3" seed="7" result="n"/><feColorMatrix in="n" type="matrix" values="0 0 0 0 1  0 0 0 0 1  0 0 0 0 1  0 0 0 -1.6 1.0" result="w"/><feComposite in="w" in2="SourceGraphic" operator="in" result="m"/><feMerge><feMergeNode in="SourceGraphic"/><feMergeNode in="m"/></feMerge></filter>
</defs>
<rect x="622" y="161" width="1096" height="890" fill="url(#blk)"/>
<path d="M622,161 L1110,161 L1150,300 L1130,400 L981,540 L950,560 L622,560 Z" fill="url(#blkA)"/>
<path d="M1330,160 L1551,160 L1540,190 L1558,234 L1573,278 L1718,200 L1718,470 L1640,470 L1560,400 L1450,330 L1380,300 L1330,250 Z" fill="url(#blk2)"/>
<path d="M622,161 L840,161 L846,197 L853,256 L853,271 L822,302 L790,262 L763,268 L700,228 L622,183 Z" fill="#ebe8e3"/>
<circle cx="676" cy="201" r="3.2" fill="#d9d4cf" stroke="#c4bfba" stroke-width=".5"/>
<circle cx="681" cy="206" r="3.2" fill="#d9d4cf" stroke="#c4bfba" stroke-width=".5"/>
<circle cx="686" cy="197" r="3.2" fill="#d9d4cf" stroke="#c4bfba" stroke-width=".5"/>
<circle cx="690" cy="210" r="3.2" fill="#d9d4cf" stroke="#c4bfba" stroke-width=".5"/>
<circle cx="695" cy="203" r="3.2" fill="#d9d4cf" stroke="#c4bfba" stroke-width=".5"/>
<circle cx="700" cy="214" r="3.2" fill="#d9d4cf" stroke="#c4bfba" stroke-width=".5"/>
<circle cx="684" cy="215" r="3.2" fill="#d9d4cf" stroke="#c4bfba" stroke-width=".5"/>
<circle cx="694" cy="220" r="3.2" fill="#d9d4cf" stroke="#c4bfba" stroke-width=".5"/>
<circle cx="704" cy="206" r="3.2" fill="#d9d4cf" stroke="#c4bfba" stroke-width=".5"/>
<path d="M655,176 L700,200 M705,185 L760,218 M712,178 L770,210 M720,215 L750,232" stroke="#d0cbc6" stroke-width=".7" fill="none"/>
<path d="M790.7,188.5 h14.3 v14.5 h-14.3z" fill="#d9d1ca"/>
<path d="M779,203 h6.5 v9 h-6.5z" fill="#d9d1ca"/>
<path d="M792,204 h9 v8 h-9z" fill="#d9d1ca"/>
<path d="M770,212 h14 v28 h-14z" fill="#d9d1ca"/>
<path d="M659,168 h12 v8 h-12z" fill="#d9d1ca"/>
<path d="M866,377 L870,389 L819,438 L799,462 L773,513 L762,529 L795,530 L840,520 L880,470 L884,400 Z" fill="#efece7"/>
<path d="M622,222 L661,251 L662,255 L631,300 L620,302 Z" fill="#e6dbe8"/>
<path d="M622,302 L631,300 L662,325 L701,334 L716,351 L735,378 L750,387 L769,404 L769,431 L622,421 Z" fill="#efece8"/>
<path d="M660,255 L697,276 L690,293 L720,314 L736,344 L754,372 L750,387 L735,378 L716,351 L701,334 L662,325 L631,300 Z" fill="#f1dede" stroke="#e3a3aa" stroke-width="1.3"/>
<path d="M640,330 h16 v9 h-16z" fill="#d9d1ca"/>
<path d="M660,338 h14 v8 h-14z" fill="#d9d1ca"/>
<path d="M645,350 h10 v7 h-10z" fill="#d9d1ca"/>
<path d="M668,352 h12 v9 h-12z" fill="#d9d1ca"/>
<path d="M690,362 h10 v8 h-10z" fill="#d9d1ca"/>
<path d="M705,370 h12 v10 h-12z" fill="#d9d1ca"/>
<path d="M695,385 h14 v7 h-14z" fill="#d9d1ca"/>
<path d="M718,392 h10 v8 h-10z" fill="#d9d1ca"/>
<path d="M630,345 h8 v6 h-8z" fill="#d9d1ca"/>
<path d="M672,290 h12 v10 h-12z" fill="#d9d1ca"/>
<path d="M700,310 h10 v8 h-10z" fill="#d9d1ca"/>
<path d="M715,330 h10 v10 h-10z" fill="#d9d1ca"/>
<path d="M620,378 L652,380 L684,389 L716,402 L739,393 L756,389 L769,406 L769,431 L758,453 L748,465 L716,455 L684,442 L652,427 L620,421 Z" fill="#c9f2c7"/>
<path d="M620,421 L652,427 L652,431 L620,426 Z" fill="#f3e6be"/>
<path d="M630,400 q20 -10 40 5 t30 20 M700,420 q15 15 35 5 M660,440 q10 -15 30 -5" fill="none" stroke="#e09a9a" stroke-width=".8" stroke-dasharray="2 2"/>
<path d="M815,550 L835,529 L862,527 L870,549 L870,593 Z" fill="#c9f2c7"/><path d="M827,528 L837,530 L817,550 L813,548 Z" fill="#aad3df"/><path d="M835,545 q8,-8 16,2 t10,20 M830,560 q10,5 20,20" fill="none" stroke="#e09a9a" stroke-width=".8" stroke-dasharray="2 2"/>
<path d="M1110,160 L1262,160 L1262,200 L1240,245 L1200,262 L1150,258 L1118,235 L1105,200 Z" fill="#b5d8a6"/>
<ellipse cx="1188" cy="203" rx="45" ry="36" fill="#d3e8cc"/>
<ellipse cx="1188" cy="203" rx="40" ry="31" fill="none" stroke="#fff" stroke-width="3"/>
<path d="M1160,180 L1218,228 M1155,195 L1205,236" stroke="#fff" stroke-width="3"/>
<path d="M1554,160 L1718,160 L1718,192 L1662,243 L1642,225 L1575,277 L1567,257 L1572,244 L1539,205 Z" fill="#a9d49e"/>
<path d="M1642.0,160.0 L1681.0,164.0 L1650.0,185.0 L1616.0,212.0 L1575.0,244.0" fill="none" stroke="#d6e8cf" stroke-width="5.2" stroke-linejoin="round" stroke-linecap="round"/><path d="M1642.0,160.0 L1681.0,164.0 L1650.0,185.0 L1616.0,212.0 L1575.0,244.0" fill="none" stroke="#ffffff" stroke-width="4" stroke-linejoin="round" stroke-linecap="round"/>
<path d="M1610,185 L1630,168" stroke="#c98a6a" stroke-width="1" stroke-dasharray="1.5 1.5"/><path d="M1606,185 l3,-5 l3,5z" fill="#d06a3a"/>
<path d="M1262,170 L1320,165 L1330,240 L1280,250 L1262,240 Z" fill="#f4f3d0"/>
<path d="M1314,215 L1330,210 L1335,238 L1318,242 Z" fill="#7fd4a8"/>
<path d="M1252,262 L1285,262 L1290,295 L1255,298 Z" fill="#c9f2c7"/>
<path d="M1344,360 L1381,360 L1381,389 L1348,392 Z" fill="#c9f2c7"/>
<path d="M1305,393 L1335,393 L1335,420 L1308,425 Z" fill="#c9f2c7"/>
<path d="M1521,570 L1555,570 L1555,603 L1521,603 Z" fill="#c9f2c7"/>
<path d="M1451,662 L1521,662 L1521,718 L1456,718 Z" fill="#c9f2c7"/>
<path d="M1082,330 L1115,320 L1120,360 L1088,365 Z" fill="#c9f2c7"/>
<path d="M1020,230 L1060,215 L1070,245 L1030,258 Z" fill="#c9f2c7"/>
<path d="M1114,372 L1150,367 L1152,405 L1116,410 Z" fill="#c9f2c7"/>
<path d="M1135,420 L1160,418 L1165,455 L1138,458 Z" fill="#c9f2c7"/>
<path d="M1585,470 L1610,468 L1612,490 L1588,492 Z" fill="#c9f2c7"/>
<path d="M1665,470 L1718,460 L1718,520 L1670,525 Z" fill="#c9f2c7"/>
<path d="M930,300 L990,280 L1030,320 L1010,345 L960,360 L935,340 Z" fill="#c9f2c7"/>
<path d="M1462,350 L1540,330 L1573,340 L1573,420 L1500,426 L1462,400 Z" fill="#f4f3d2"/>
<path d="M1500,350 L1520,345 L1525,370 L1505,372 Z" fill="#88d9ae"/><path d="M1490,375 L1515,372 L1515,395 L1492,395 Z" fill="#c9f2c7"/>
<path d="M1640,420 L1718,400 L1718,560 L1640,560 Z" fill="#f1f1d6"/>
<path d="M1125,437 L1175,420 L1170,510 L1125,510 Z" fill="#f6f5d6"/><ellipse cx="1145" cy="505" rx="14" ry="10" fill="#88d9ae"/>
<path d="M1373,732 L1425,725 L1447,762 L1469,799 L1447,836 L1425,855 L1395,858 L1373,843 L1351,821 L1351,781 Z" fill="#c9f2c7"/>
<rect x="1418" y="795" width="22" height="30" fill="#dcdcdc"/>
<path d="M1294,770 L1327,760 L1340,800 L1322,804 L1292,811 Z" fill="#c9f2c7"/>
<path d="M1147,735 L1206,735 L1200,772 L1191,801 L1180,797 L1160,782 L1150,760 Z" fill="#c9f2c7"/>
<path d="M1558,777 L1610,762 L1647,747 L1684,740 L1720,732 L1720,940 L1699,925 L1669,892 L1632,851 L1595,814 Z" fill="#d4f0b8"/>
<path d="M1551,725 L1610,715 L1610,765 L1560,770 Z" fill="#bfe8c0"/>
<path d="M1632,990 L1718,975 L1718,1051 L1620,1051 Z" fill="#c9f2c7"/>
<path d="M1632,990 L1700,985 L1700,1000" fill="none" stroke="#a06a7a" stroke-width="2"/>
<path d="M1292,811 L1322,804 L1344,811 L1370,845 L1418,869 L1475,893 L1532,912 L1566,936 L1589,979 L1604,1017 L1608,1051 L1598,1051 L1594,1017 L1578,982 L1556,942 L1525,918 L1470,900 L1412,876 L1363,852 L1338,818 L1320,812 L1296,818 Z" fill="#f3e4b4"/>
<path d="M622,183 L700,237 L763.5,275 L763.5,267.5 L729.8,238 L762,254 L745,205 L757,203 L777.7,248 L801,243 L807.5,174 L816.6,173 L834.7,179 L840,192 L841,230 L853,238 L855,274 L842.5,284 L824,300 L822,330 L849,360 L866,377 L870,389 L819,438 L799,462 L773,513 L762,529 L795,530 L815,550 L870,593 L870,735 L1147,735 L1150,760 L1160,782 L1180,797 L1191,801 L1200,772 L1206,735 L1224,735 L1285,735 L1285,792 L1292,811 L1322,804 L1344,811 L1370,845 L1418,869 L1475,893 L1532,912 L1566,936 L1589,979 L1604,1017 L1608,1051 L622,1051 L622,425 L652,428 L716,458 L748,469 L761,454 L770,431 L770,404 L757,376 L740,346 L723,317 L698,277 L661,254 L622,225 Z" fill="#aad3df"/>
<ellipse cx="1170" cy="773" rx="19" ry="12" transform="rotate(48 1170 773)" fill="#aad3df"/><path d="M1178,760 Q1190,775 1187,792" stroke="#f3e4b4" stroke-width="2.5" fill="none"/>
<ellipse cx="1309" cy="785" rx="12" ry="10" fill="#aad3df"/>
<path d="M1395.4,664.0 L1432.5,673.2 L1469.5,699.1 L1506.5,728.7 L1547.2,762.1 L1580.5,795.4 L1613.8,828.7 L1647.1,862.0 L1676.7,891.6 L1706.3,921.2 L1721.1,936.0" fill="none" stroke="#aad3df" stroke-width="21" stroke-linejoin="round"/>
<path d="M1554.6,765.8 L1591.6,762.1 L1628.6,747.3 L1658.2,725.0 L1684.1,699.1 L1720.0,680.6" fill="none" stroke="#aad3df" stroke-width="7"/>
<path d="M1284.4,680.6 L1306.6,676.9 L1351.0,665.8 L1395.4,662.1" fill="none" stroke="#aad3df" stroke-width="9"/>
<path d="M1376.9,606.6 L1384.3,632.5 L1395.4,662.1" fill="none" stroke="#aad3df" stroke-width="4"/>
<path d="M1417.6,160.0 L1425.0,215.5 L1447.3,271.0 L1469.5,319.1 L1476.9,367.3" fill="none" stroke="#aad3df" stroke-width="3"/>
<path d="M1240,740 L1285,790" stroke="#d6d2ce" stroke-width="3"/><path d="M1225,735 L1270,800 L1290,800" fill="none" stroke="#9a9aa6" stroke-width="1.5"/>
<path d="M845.6,160.0 L858.5,289.5 L888.1,345.0 L925.1,396.8 L965.8,448.6 L1006.5,493.0 L1047.2,515.2 L1099.0,560.0" fill="none" stroke="#8c8c8c" stroke-width="3.5"/><path d="M845.6,160.0 L858.5,289.5 L888.1,345.0 L925.1,396.8 L965.8,448.6 L1006.5,493.0 L1047.2,515.2 L1099.0,560.0" fill="none" stroke="#fff" stroke-width="2" stroke-dasharray="3 3"/>
<path d="M622.0,314.0 L631.0,314.0 L662.0,321.0 L694.0,334.0 L720.0,355.0 L733.0,378.0" fill="none" stroke="#d4cfc9" stroke-width="4.9" stroke-linejoin="round" stroke-linecap="round"/><path d="M622.0,314.0 L631.0,314.0 L662.0,321.0 L694.0,334.0 L720.0,355.0 L733.0,378.0" fill="none" stroke="#ffffff" stroke-width="3.5" stroke-linejoin="round" stroke-linecap="round"/>
<path d="M624.0,357.0 L667.0,363.0 L731.0,387.0" fill="none" stroke="#d4cfc9" stroke-width="4.9" stroke-linejoin="round" stroke-linecap="round"/><path d="M624.0,357.0 L667.0,363.0 L731.0,387.0" fill="none" stroke="#ffffff" stroke-width="3.5" stroke-linejoin="round" stroke-linecap="round"/>
<path d="M633.0,325.0 L628.0,368.0" fill="none" stroke="#d4cfc9" stroke-width="4.9" stroke-linejoin="round" stroke-linecap="round"/><path d="M633.0,325.0 L628.0,368.0" fill="none" stroke="#ffffff" stroke-width="3.5" stroke-linejoin="round" stroke-linecap="round"/>
<path d="M690.0,342.0 L684.0,372.0" fill="none" stroke="#d4cfc9" stroke-width="4.9" stroke-linejoin="round" stroke-linecap="round"/><path d="M690.0,342.0 L684.0,372.0" fill="none" stroke="#ffffff" stroke-width="3.5" stroke-linejoin="round" stroke-linecap="round"/>
<path d="M684.0,393.0 L735.0,406.0" fill="none" stroke="#d4cfc9" stroke-width="4.9" stroke-linejoin="round" stroke-linecap="round"/><path d="M684.0,393.0 L735.0,406.0" fill="none" stroke="#ffffff" stroke-width="3.5" stroke-linejoin="round" stroke-linecap="round"/>
<path d="M1439.9,385.8 L1469.5,411.7 L1506.5,433.9 L1536.1,452.4 L1573.1,474.6 L1610.1,493.1 L1647.1,507.9 L1720.0,511.6" fill="none" stroke="#d4cfc9" stroke-width="4.9" stroke-linejoin="round" stroke-linecap="round"/><path d="M1439.9,385.8 L1469.5,411.7 L1506.5,433.9 L1536.1,452.4 L1573.1,474.6 L1610.1,493.1 L1647.1,507.9 L1720.0,511.6" fill="none" stroke="#ffffff" stroke-width="3.5" stroke-linejoin="round" stroke-linecap="round"/>
<path d="M1543.5,456.1 L1628.6,459.8" fill="none" stroke="#d4cfc9" stroke-width="4.9" stroke-linejoin="round" stroke-linecap="round"/><path d="M1543.5,456.1 L1628.6,459.8" fill="none" stroke="#ffffff" stroke-width="3.5" stroke-linejoin="round" stroke-linecap="round"/>
<path d="M1339.9,160.0 L1351.0,189.6 L1358.4,234.0 L1362.1,267.3 L1388.0,289.5 L1425.0,308.0 L1462.1,326.5 L1476.9,345.0" fill="none" stroke="#d4cfc9" stroke-width="4.9" stroke-linejoin="round" stroke-linecap="round"/><path d="M1339.9,160.0 L1351.0,189.6 L1358.4,234.0 L1362.1,267.3 L1388.0,289.5 L1425.0,308.0 L1462.1,326.5 L1476.9,345.0" fill="none" stroke="#ffffff" stroke-width="3.5" stroke-linejoin="round" stroke-linecap="round"/>
<path d="M1547.2,160.0 L1528.7,189.6 L1517.6,222.9 L1521.3,252.5 L1536.1,271.0 L1554.6,282.1 L1573.1,289.5" fill="none" stroke="#d4cfc9" stroke-width="4.9" stroke-linejoin="round" stroke-linecap="round"/><path d="M1547.2,160.0 L1528.7,189.6 L1517.6,222.9 L1521.3,252.5 L1536.1,271.0 L1554.6,282.1 L1573.1,289.5" fill="none" stroke="#ffffff" stroke-width="3.5" stroke-linejoin="round" stroke-linecap="round"/>
<path d="M1495.4,197.0 L1484.3,234.0 L1484.3,271.0 L1499.1,315.4" fill="none" stroke="#d4cfc9" stroke-width="4.9" stroke-linejoin="round" stroke-linecap="round"/><path d="M1495.4,197.0 L1484.3,234.0 L1484.3,271.0 L1499.1,315.4" fill="none" stroke="#ffffff" stroke-width="3.5" stroke-linejoin="round" stroke-linecap="round"/>
<path d="M1417.6,204.4 L1413.9,241.4 L1447.3,271.0 L1462.1,282.1" fill="none" stroke="#d4cfc9" stroke-width="4.9" stroke-linejoin="round" stroke-linecap="round"/><path d="M1417.6,204.4 L1413.9,241.4 L1447.3,271.0 L1462.1,282.1" fill="none" stroke="#ffffff" stroke-width="3.5" stroke-linejoin="round" stroke-linecap="round"/>
<path d="M1573.1,293.2 L1610.1,278.4 L1647.1,263.6 L1684.1,248.8 L1720.0,234.0" fill="none" stroke="#d4cfc9" stroke-width="4.9" stroke-linejoin="round" stroke-linecap="round"/><path d="M1573.1,293.2 L1610.1,278.4 L1647.1,263.6 L1684.1,248.8 L1720.0,234.0" fill="none" stroke="#ffffff" stroke-width="3.5" stroke-linejoin="round" stroke-linecap="round"/>
<path d="M1595.3,315.4 L1639.7,315.4 L1669.3,345.0 L1676.7,367.3" fill="none" stroke="#d4cfc9" stroke-width="4.9" stroke-linejoin="round" stroke-linecap="round"/><path d="M1595.3,315.4 L1639.7,315.4 L1669.3,345.0 L1676.7,367.3" fill="none" stroke="#ffffff" stroke-width="3.5" stroke-linejoin="round" stroke-linecap="round"/>
<path d="M1654.5,271.0 L1665.6,315.4 L1684.1,345.0" fill="none" stroke="#d4cfc9" stroke-width="4.9" stroke-linejoin="round" stroke-linecap="round"/><path d="M1654.5,271.0 L1665.6,315.4 L1684.1,345.0" fill="none" stroke="#ffffff" stroke-width="3.5" stroke-linejoin="round" stroke-linecap="round"/>
<path d="M1580.5,400.6 L1610.1,382.1 L1647.1,367.3" fill="none" stroke="#d4cfc9" stroke-width="4.9" stroke-linejoin="round" stroke-linecap="round"/><path d="M1580.5,400.6 L1610.1,382.1 L1647.1,367.3" fill="none" stroke="#ffffff" stroke-width="3.5" stroke-linejoin="round" stroke-linecap="round"/>
<path d="M1351.0,337.6 L1402.8,300.6 L1447.3,271.0" fill="none" stroke="#d4cfc9" stroke-width="4.9" stroke-linejoin="round" stroke-linecap="round"/><path d="M1351.0,337.6 L1402.8,300.6 L1447.3,271.0" fill="none" stroke="#ffffff" stroke-width="3.5" stroke-linejoin="round" stroke-linecap="round"/>
<path d="M1306.6,271.0 L1351.0,252.5 L1388.0,234.0" fill="none" stroke="#d4cfc9" stroke-width="4.9" stroke-linejoin="round" stroke-linecap="round"/><path d="M1306.6,271.0 L1351.0,252.5 L1388.0,234.0" fill="none" stroke="#ffffff" stroke-width="3.5" stroke-linejoin="round" stroke-linecap="round"/>
<path d="M1240.0,614.0 L1284.4,617.7 L1332.5,632.5" fill="none" stroke="#d4cfc9" stroke-width="4.9" stroke-linejoin="round" stroke-linecap="round"/><path d="M1240.0,614.0 L1284.4,617.7 L1332.5,632.5" fill="none" stroke="#ffffff" stroke-width="3.5" stroke-linejoin="round" stroke-linecap="round"/>
<path d="M1373.2,732.5 L1380.6,769.5 L1399.1,791.7 L1417.6,810.2 L1425.0,836.1 L1439.9,854.6" fill="none" stroke="#d4cfc9" stroke-width="4.9" stroke-linejoin="round" stroke-linecap="round"/><path d="M1373.2,732.5 L1380.6,769.5 L1399.1,791.7 L1417.6,810.2 L1425.0,836.1 L1439.9,854.6" fill="none" stroke="#ffffff" stroke-width="3.5" stroke-linejoin="round" stroke-linecap="round"/>
<path d="M1573.1,684.3 L1610.1,713.9 L1647.1,739.9 L1684.1,776.9 L1720.0,806.5" fill="none" stroke="#d4cfc9" stroke-width="4.9" stroke-linejoin="round" stroke-linecap="round"/><path d="M1573.1,684.3 L1610.1,713.9 L1647.1,739.9 L1684.1,776.9 L1720.0,806.5" fill="none" stroke="#ffffff" stroke-width="3.5" stroke-linejoin="round" stroke-linecap="round"/>
<path d="M1462.1,780.6 L1506.5,739.9" fill="none" stroke="#d4cfc9" stroke-width="4.9" stroke-linejoin="round" stroke-linecap="round"/><path d="M1462.1,780.6 L1506.5,739.9" fill="none" stroke="#ffffff" stroke-width="3.5" stroke-linejoin="round" stroke-linecap="round"/>
<path d="M1480.6,813.9 L1536.1,769.5" fill="none" stroke="#d4cfc9" stroke-width="4.9" stroke-linejoin="round" stroke-linecap="round"/><path d="M1480.6,813.9 L1536.1,769.5" fill="none" stroke="#ffffff" stroke-width="3.5" stroke-linejoin="round" stroke-linecap="round"/>
<path d="M1499.1,836.1 L1565.7,799.1" fill="none" stroke="#d4cfc9" stroke-width="4.9" stroke-linejoin="round" stroke-linecap="round"/><path d="M1499.1,836.1 L1565.7,799.1" fill="none" stroke="#ffffff" stroke-width="3.5" stroke-linejoin="round" stroke-linecap="round"/>
<path d="M1528.7,865.7 L1595.3,832.4" fill="none" stroke="#d4cfc9" stroke-width="4.9" stroke-linejoin="round" stroke-linecap="round"/><path d="M1528.7,865.7 L1595.3,832.4" fill="none" stroke="#ffffff" stroke-width="3.5" stroke-linejoin="round" stroke-linecap="round"/>
<path d="M1558.3,902.7 L1628.6,865.7" fill="none" stroke="#d4cfc9" stroke-width="4.9" stroke-linejoin="round" stroke-linecap="round"/><path d="M1558.3,902.7 L1628.6,865.7" fill="none" stroke="#ffffff" stroke-width="3.5" stroke-linejoin="round" stroke-linecap="round"/>
<path d="M1439.9,732.5 L1476.9,769.5 L1513.9,806.5 L1547.2,836.1 L1591.6,876.8 L1628.6,910.1 L1647.1,940.1" fill="none" stroke="#d4cfc9" stroke-width="4.9" stroke-linejoin="round" stroke-linecap="round"/><path d="M1439.9,732.5 L1476.9,769.5 L1513.9,806.5 L1547.2,836.1 L1591.6,876.8 L1628.6,910.1 L1647.1,940.1" fill="none" stroke="#ffffff" stroke-width="3.5" stroke-linejoin="round" stroke-linecap="round"/>
<path d="M1306.6,717.6 L1336.2,688.0 L1358.4,680.6 L1395.4,702.8" fill="none" stroke="#d4cfc9" stroke-width="4.9" stroke-linejoin="round" stroke-linecap="round"/><path d="M1306.6,717.6 L1336.2,688.0 L1358.4,680.6 L1395.4,702.8" fill="none" stroke="#ffffff" stroke-width="3.5" stroke-linejoin="round" stroke-linecap="round"/>
<path d="M1062.0,160.0 L1080.5,193.3 L1102.7,226.6 L1124.9,252.5 L1150.8,271.0 L1180.4,278.4 L1210.0,271.0 L1240.0,252.5" fill="none" stroke="#c8c98e" stroke-width="6.8" stroke-linejoin="round" stroke-linecap="round"/><path d="M1062.0,160.0 L1080.5,193.3 L1102.7,226.6 L1124.9,252.5 L1150.8,271.0 L1180.4,278.4 L1210.0,271.0 L1240.0,252.5" fill="none" stroke="#f5f7bd" stroke-width="5" stroke-linejoin="round" stroke-linecap="round"/>
<path d="M1240.0,248.8 L1262.2,247.0 L1284.4,256.2 L1295.5,278.4 L1299.2,300.6 L1314.0,315.4 L1351.0,341.3 L1388.0,363.6 L1425.0,382.1 L1439.9,387.6" fill="none" stroke="#c8c98e" stroke-width="6.8" stroke-linejoin="round" stroke-linecap="round"/><path d="M1240.0,248.8 L1262.2,247.0 L1284.4,256.2 L1295.5,278.4 L1299.2,300.6 L1314.0,315.4 L1351.0,341.3 L1388.0,363.6 L1425.0,382.1 L1439.9,387.6" fill="none" stroke="#f5f7bd" stroke-width="5" stroke-linejoin="round" stroke-linecap="round"/>
<path d="M980.6,544.8 L1017.6,515.2 L1054.6,481.9 L1084.2,452.3 L1106.4,419.0 L1124.9,389.4 L1136.0,359.8 L1150.8,315.4 L1161.9,282.1" fill="none" stroke="#c8c98e" stroke-width="6.8" stroke-linejoin="round" stroke-linecap="round"/><path d="M980.6,544.8 L1017.6,515.2 L1054.6,481.9 L1084.2,452.3 L1106.4,419.0 L1124.9,389.4 L1136.0,359.8 L1150.8,315.4 L1161.9,282.1" fill="none" stroke="#f5f7bd" stroke-width="5" stroke-linejoin="round" stroke-linecap="round"/>
<path d="M1270.0,303.9 L1240.0,330.2 L1224.8,359.8 L1206.3,396.8 L1191.5,433.8 L1173.0,478.2 L1158.2,515.2 L1147.1,560.0" fill="none" stroke="#c8c98e" stroke-width="6.8" stroke-linejoin="round" stroke-linecap="round"/><path d="M1270.0,303.9 L1240.0,330.2 L1224.8,359.8 L1206.3,396.8 L1191.5,433.8 L1173.0,478.2 L1158.2,515.2 L1147.1,560.0" fill="none" stroke="#f5f7bd" stroke-width="5" stroke-linejoin="round" stroke-linecap="round"/>
<path d="M1295.1,319.1 L1258.1,382.0 L1224.8,426.4 L1206.3,463.4 L1191.5,500.4 L1176.7,541.1 L1169.3,560.0" fill="none" stroke="#c8c98e" stroke-width="6.8" stroke-linejoin="round" stroke-linecap="round"/><path d="M1295.1,319.1 L1258.1,382.0 L1224.8,426.4 L1206.3,463.4 L1191.5,500.4 L1176.7,541.1 L1169.3,560.0" fill="none" stroke="#f5f7bd" stroke-width="5" stroke-linejoin="round" stroke-linecap="round"/>
<path d="M1365.8,352.5 L1347.3,389.5 L1325.1,433.9 L1302.9,485.7 L1284.4,530.1 L1277.0,560.1" fill="none" stroke="#c8c98e" stroke-width="6.8" stroke-linejoin="round" stroke-linecap="round"/><path d="M1365.8,352.5 L1347.3,389.5 L1325.1,433.9 L1302.9,485.7 L1284.4,530.1 L1277.0,560.1" fill="none" stroke="#f5f7bd" stroke-width="5" stroke-linejoin="round" stroke-linecap="round"/>
<path d="M877.0,322.8 L910.3,300.6 L943.6,278.4 L976.9,256.2 L1006.5,234.0" fill="none" stroke="#c8c98e" stroke-width="6.8" stroke-linejoin="round" stroke-linecap="round"/><path d="M877.0,322.8 L910.3,300.6 L943.6,278.4 L976.9,256.2 L1006.5,234.0" fill="none" stroke="#f5f7bd" stroke-width="5" stroke-linejoin="round" stroke-linecap="round"/>
<path d="M888.1,293.2 L914.0,326.5 L936.2,359.8 L958.4,389.4" fill="none" stroke="#c8c98e" stroke-width="6.8" stroke-linejoin="round" stroke-linecap="round"/><path d="M888.1,293.2 L914.0,326.5 L936.2,359.8 L958.4,389.4" fill="none" stroke="#f5f7bd" stroke-width="5" stroke-linejoin="round" stroke-linecap="round"/>
<path d="M865.9,248.8 L902.9,226.6 L936.2,204.4 L973.2,174.8" fill="none" stroke="#c8c98e" stroke-width="6.8" stroke-linejoin="round" stroke-linecap="round"/><path d="M865.9,248.8 L902.9,226.6 L936.2,204.4 L973.2,174.8" fill="none" stroke="#f5f7bd" stroke-width="5" stroke-linejoin="round" stroke-linecap="round"/>
<path d="M877.0,282.1 L914.0,259.9 L962.1,234.0 L995.4,215.5" fill="none" stroke="#c8c98e" stroke-width="6.8" stroke-linejoin="round" stroke-linecap="round"/><path d="M877.0,282.1 L914.0,259.9 L962.1,234.0 L995.4,215.5" fill="none" stroke="#f5f7bd" stroke-width="5" stroke-linejoin="round" stroke-linecap="round"/>
<path d="M1069.4,341.3 L1121.2,352.4 L1165.6,367.2 L1210.0,378.3 L1240.0,385.7" fill="none" stroke="#c8c98e" stroke-width="6.8" stroke-linejoin="round" stroke-linecap="round"/><path d="M1069.4,341.3 L1121.2,352.4 L1165.6,367.2 L1210.0,378.3 L1240.0,385.7" fill="none" stroke="#f5f7bd" stroke-width="5" stroke-linejoin="round" stroke-linecap="round"/>
<path d="M1240.0,385.8 L1277.0,400.6 L1314.0,411.7 L1351.0,422.8" fill="none" stroke="#c8c98e" stroke-width="6.8" stroke-linejoin="round" stroke-linecap="round"/><path d="M1240.0,385.8 L1277.0,400.6 L1314.0,411.7 L1351.0,422.8" fill="none" stroke="#f5f7bd" stroke-width="5" stroke-linejoin="round" stroke-linecap="round"/>
<path d="M1447.3,367.3 L1476.9,348.7 L1506.5,341.3 L1543.5,337.6 L1565.7,330.2 L1595.3,315.4 L1628.6,300.6 L1665.6,287.7 L1720.0,282.1" fill="none" stroke="#c8c98e" stroke-width="6.8" stroke-linejoin="round" stroke-linecap="round"/><path d="M1447.3,367.3 L1476.9,348.7 L1506.5,341.3 L1543.5,337.6 L1565.7,330.2 L1595.3,315.4 L1628.6,300.6 L1665.6,287.7 L1720.0,282.1" fill="none" stroke="#f5f7bd" stroke-width="5" stroke-linejoin="round" stroke-linecap="round"/>
<path d="M1484.3,333.9 L1447.3,367.3 L1425.0,400.6 L1406.5,426.5 L1388.0,456.1 L1373.2,493.1 L1362.1,530.1 L1358.4,560.1" fill="none" stroke="#c8c98e" stroke-width="6.8" stroke-linejoin="round" stroke-linecap="round"/><path d="M1484.3,333.9 L1447.3,367.3 L1425.0,400.6 L1406.5,426.5 L1388.0,456.1 L1373.2,493.1 L1362.1,530.1 L1358.4,560.1" fill="none" stroke="#f5f7bd" stroke-width="5" stroke-linejoin="round" stroke-linecap="round"/>
<path d="M1720.0,300.6 L1684.1,337.6 L1654.5,389.5 L1643.4,419.1 L1639.7,456.1 L1637.9,493.1 L1637.9,530.1 L1637.9,560.1" fill="none" stroke="#c8c98e" stroke-width="6.8" stroke-linejoin="round" stroke-linecap="round"/><path d="M1720.0,300.6 L1684.1,337.6 L1654.5,389.5 L1643.4,419.1 L1639.7,456.1 L1637.9,493.1 L1637.9,530.1 L1637.9,560.1" fill="none" stroke="#f5f7bd" stroke-width="5" stroke-linejoin="round" stroke-linecap="round"/>
<path d="M1284.4,665.8 L1295.5,688.0 L1310.3,710.2 L1328.8,732.5 L1351.0,741.7 L1380.6,738.0 L1406.5,728.7 L1425.0,721.3" fill="none" stroke="#c8c98e" stroke-width="6.8" stroke-linejoin="round" stroke-linecap="round"/><path d="M1284.4,665.8 L1295.5,688.0 L1310.3,710.2 L1328.8,732.5 L1351.0,741.7 L1380.6,738.0 L1406.5,728.7 L1425.0,721.3" fill="none" stroke="#f5f7bd" stroke-width="5" stroke-linejoin="round" stroke-linecap="round"/>
<path d="M1399.1,665.8 L1417.6,695.4 L1425.0,721.3 L1447.3,754.7 L1456.1,779.8 L1472.1,807.9 L1483.9,836.1 L1510.2,862.0 L1532.0,877.9 L1560.1,904.9 L1579.0,940.1" fill="none" stroke="#c8c98e" stroke-width="6.8" stroke-linejoin="round" stroke-linecap="round"/><path d="M1399.1,665.8 L1417.6,695.4 L1425.0,721.3 L1447.3,754.7 L1456.1,779.8 L1472.1,807.9 L1483.9,836.1 L1510.2,862.0 L1532.0,877.9 L1560.1,904.9 L1579.0,940.1" fill="none" stroke="#f5f7bd" stroke-width="5" stroke-linejoin="round" stroke-linecap="round"/>
<path d="M1425.0,662.1 L1447.3,688.0 L1476.9,713.9 L1506.5,739.9 L1536.1,769.5 L1565.7,799.1 L1595.3,832.4 L1628.6,865.7 L1665.6,895.3 L1698.9,924.9 L1720.0,940.1" fill="none" stroke="#c8c98e" stroke-width="6.8" stroke-linejoin="round" stroke-linecap="round"/><path d="M1425.0,662.1 L1447.3,688.0 L1476.9,713.9 L1506.5,739.9 L1536.1,769.5 L1565.7,799.1 L1595.3,832.4 L1628.6,865.7 L1665.6,895.3 L1698.9,924.9 L1720.0,940.1" fill="none" stroke="#f5f7bd" stroke-width="5" stroke-linejoin="round" stroke-linecap="round"/>
<path d="M1476.9,540.0 L1462.1,577.0 L1447.3,614.0 L1432.5,651.0 L1425.0,665.8" fill="none" stroke="#c8c98e" stroke-width="6.8" stroke-linejoin="round" stroke-linecap="round"/><path d="M1476.9,540.0 L1462.1,577.0 L1447.3,614.0 L1432.5,651.0 L1425.0,665.8" fill="none" stroke="#f5f7bd" stroke-width="5" stroke-linejoin="round" stroke-linecap="round"/>
<path d="M1639.7,540.0 L1636.0,562.2 L1624.9,599.2 L1602.7,628.8 L1580.5,651.0 L1558.3,680.6" fill="none" stroke="#c8c98e" stroke-width="6.8" stroke-linejoin="round" stroke-linecap="round"/><path d="M1639.7,540.0 L1636.0,562.2 L1624.9,599.2 L1602.7,628.8 L1580.5,651.0 L1558.3,680.6" fill="none" stroke="#f5f7bd" stroke-width="5" stroke-linejoin="round" stroke-linecap="round"/>
<path d="M1613.3,992.8 L1622.8,1035.7" fill="none" stroke="#c8c98e" stroke-width="6.8" stroke-linejoin="round" stroke-linecap="round"/><path d="M1613.3,992.8 L1622.8,1035.7" fill="none" stroke="#f5f7bd" stroke-width="5" stroke-linejoin="round" stroke-linecap="round"/>
<path d="M1589.4,959.4 L1613.3,992.8 L1720.0,969.0" fill="none" stroke="#c8c98e" stroke-width="6.8" stroke-linejoin="round" stroke-linecap="round"/><path d="M1589.4,959.4 L1613.3,992.8 L1720.0,969.0" fill="none" stroke="#f5f7bd" stroke-width="5" stroke-linejoin="round" stroke-linecap="round"/>
<path d="M679.2,160.0 L708.8,178.5 L745.8,189.6 L790.2,182.2 L827.3,169.3 L845.8,160.0" fill="none" stroke="#d8ae77" stroke-width="8.8" stroke-linejoin="round" stroke-linecap="round"/><path d="M679.2,160.0 L708.8,178.5 L745.8,189.6 L790.2,182.2 L827.3,169.3 L845.8,160.0" fill="none" stroke="#f9d6a3" stroke-width="7" stroke-linejoin="round" stroke-linecap="round"/>
<path d="M843.0,160.0 L847.4,215.5 L854.8,271.0 L867.8,308.0 L882.6,337.6 L884.4,356.1 L876.3,382.0 L874.0,419.0 L883.7,456.0 L902.9,485.6 L928.8,511.5 L958.4,533.7 L995.4,550.4 L1017.6,560.0" fill="none" stroke="#d8ae77" stroke-width="8.8" stroke-linejoin="round" stroke-linecap="round"/><path d="M843.0,160.0 L847.4,215.5 L854.8,271.0 L867.8,308.0 L882.6,337.6 L884.4,356.1 L876.3,382.0 L874.0,419.0 L883.7,456.0 L902.9,485.6 L928.8,511.5 L958.4,533.7 L995.4,550.4 L1017.6,560.0" fill="none" stroke="#f9d6a3" stroke-width="7" stroke-linejoin="round" stroke-linecap="round"/>
<path d="M860.4,160.0 L875.2,204.4 L895.5,241.4 L917.7,278.4 L936.2,308.0 L951.0,333.9 L965.8,348.7" fill="none" stroke="#d8ae77" stroke-width="8.8" stroke-linejoin="round" stroke-linecap="round"/><path d="M860.4,160.0 L875.2,204.4 L895.5,241.4 L917.7,278.4 L936.2,308.0 L951.0,333.9 L965.8,348.7" fill="none" stroke="#f9d6a3" stroke-width="7" stroke-linejoin="round" stroke-linecap="round"/>
<path d="M895.5,160.0 L921.4,193.3 L947.3,226.6 L969.5,252.5 L991.7,282.1 L1013.9,311.7 L1032.4,326.5 L1062.0,341.3 L1099.0,356.1 L1143.4,374.6 L1191.5,396.8 L1240.0,415.3" fill="none" stroke="#d8ae77" stroke-width="8.8" stroke-linejoin="round" stroke-linecap="round"/><path d="M895.5,160.0 L921.4,193.3 L947.3,226.6 L969.5,252.5 L991.7,282.1 L1013.9,311.7 L1032.4,326.5 L1062.0,341.3 L1099.0,356.1 L1143.4,374.6 L1191.5,396.8 L1240.0,415.3" fill="none" stroke="#f9d6a3" stroke-width="7" stroke-linejoin="round" stroke-linecap="round"/>
<path d="M973.2,160.0 L991.7,185.9 L1010.2,211.8 L1028.7,234.0 L1054.6,256.2 L1080.5,282.1 L1106.4,308.0 L1136.0,326.5" fill="none" stroke="#d8ae77" stroke-width="8.8" stroke-linejoin="round" stroke-linecap="round"/><path d="M973.2,160.0 L991.7,185.9 L1010.2,211.8 L1028.7,234.0 L1054.6,256.2 L1080.5,282.1 L1106.4,308.0 L1136.0,326.5" fill="none" stroke="#f9d6a3" stroke-width="7" stroke-linejoin="round" stroke-linecap="round"/>
<path d="M1062.0,226.6 L1043.5,252.5 L1028.7,282.1 L1017.6,308.0 L1006.5,333.9 L988.0,352.4 L962.1,367.2 L932.5,382.0 L902.9,400.5 L880.7,419.0" fill="none" stroke="#d8ae77" stroke-width="8.8" stroke-linejoin="round" stroke-linecap="round"/><path d="M1062.0,226.6 L1043.5,252.5 L1028.7,282.1 L1017.6,308.0 L1006.5,333.9 L988.0,352.4 L962.1,367.2 L932.5,382.0 L902.9,400.5 L880.7,419.0" fill="none" stroke="#f9d6a3" stroke-width="7" stroke-linejoin="round" stroke-linecap="round"/>
<path d="M880.7,456.0 L914.0,430.1 L951.0,407.9 L988.0,389.4 L1021.3,378.3" fill="none" stroke="#d8ae77" stroke-width="8.8" stroke-linejoin="round" stroke-linecap="round"/><path d="M880.7,456.0 L914.0,430.1 L951.0,407.9 L988.0,389.4 L1021.3,378.3" fill="none" stroke="#f9d6a3" stroke-width="7" stroke-linejoin="round" stroke-linecap="round"/>
<path d="M1013.9,370.9 L1028.7,404.2 L1047.2,433.8 L1069.4,467.1 L1099.0,500.4 L1128.6,526.3 L1158.2,548.5 L1180.4,560.0" fill="none" stroke="#d8ae77" stroke-width="8.8" stroke-linejoin="round" stroke-linecap="round"/><path d="M1013.9,370.9 L1028.7,404.2 L1047.2,433.8 L1069.4,467.1 L1099.0,500.4 L1128.6,526.3 L1158.2,548.5 L1180.4,560.0" fill="none" stroke="#f9d6a3" stroke-width="7" stroke-linejoin="round" stroke-linecap="round"/>
<path d="M962.1,245.1 L976.9,226.6 L995.4,200.7" fill="none" stroke="#d8ae77" stroke-width="8.8" stroke-linejoin="round" stroke-linecap="round"/><path d="M962.1,245.1 L976.9,226.6 L995.4,200.7" fill="none" stroke="#f9d6a3" stroke-width="7" stroke-linejoin="round" stroke-linecap="round"/>
<path d="M1240.0,415.4 L1351.0,456.1 L1432.5,485.7 L1521.3,519.0 L1591.6,548.6 L1610.1,560.1" fill="none" stroke="#d8ae77" stroke-width="8.8" stroke-linejoin="round" stroke-linecap="round"/><path d="M1240.0,415.4 L1351.0,456.1 L1432.5,485.7 L1521.3,519.0 L1591.6,548.6 L1610.1,560.1" fill="none" stroke="#f9d6a3" stroke-width="7" stroke-linejoin="round" stroke-linecap="round"/>
<path d="M1240.0,448.7 L1288.1,467.2 L1351.0,493.1 L1395.4,511.6 L1454.7,533.8 L1499.1,552.3 L1521.3,560.1" fill="none" stroke="#d8ae77" stroke-width="8.8" stroke-linejoin="round" stroke-linecap="round"/><path d="M1240.0,448.7 L1288.1,467.2 L1351.0,493.1 L1395.4,511.6 L1454.7,533.8 L1499.1,552.3 L1521.3,560.1" fill="none" stroke="#f9d6a3" stroke-width="7" stroke-linejoin="round" stroke-linecap="round"/>
<path d="M1351.0,456.1 L1354.7,493.1 L1356.6,530.1 L1358.4,560.1" fill="none" stroke="#d8ae77" stroke-width="8.8" stroke-linejoin="round" stroke-linecap="round"/><path d="M1351.0,456.1 L1354.7,493.1 L1356.6,530.1 L1358.4,560.1" fill="none" stroke="#f9d6a3" stroke-width="7" stroke-linejoin="round" stroke-linecap="round"/>
<path d="M1240.0,578.9 L1284.4,591.8 L1314.0,606.6 L1351.0,621.4 L1388.0,628.8 L1425.0,639.9 L1462.1,654.7 L1499.1,669.5 L1536.1,682.5 L1573.1,684.3 L1610.1,682.5 L1647.1,678.8 L1684.1,673.2 L1720.0,667.7" fill="none" stroke="#d8ae77" stroke-width="8.8" stroke-linejoin="round" stroke-linecap="round"/><path d="M1240.0,578.9 L1284.4,591.8 L1314.0,606.6 L1351.0,621.4 L1388.0,628.8 L1425.0,639.9 L1462.1,654.7 L1499.1,669.5 L1536.1,682.5 L1573.1,684.3 L1610.1,682.5 L1647.1,678.8 L1684.1,673.2 L1720.0,667.7" fill="none" stroke="#f9d6a3" stroke-width="7" stroke-linejoin="round" stroke-linecap="round"/>
<path d="M1351.0,540.0 L1354.7,569.6 L1362.1,595.5 L1376.9,625.1 L1388.0,651.0 L1399.1,665.8" fill="none" stroke="#d8ae77" stroke-width="8.8" stroke-linejoin="round" stroke-linecap="round"/><path d="M1351.0,540.0 L1354.7,569.6 L1362.1,595.5 L1376.9,625.1 L1388.0,651.0 L1399.1,665.8" fill="none" stroke="#f9d6a3" stroke-width="7" stroke-linejoin="round" stroke-linecap="round"/>
<path d="M1469.5,540.0 L1499.1,551.1 L1536.1,565.9 L1573.1,577.0 L1602.7,588.1 L1628.6,602.9 L1665.6,621.4 L1702.6,639.9 L1720.0,647.3" fill="none" stroke="#d8ae77" stroke-width="8.8" stroke-linejoin="round" stroke-linecap="round"/><path d="M1469.5,540.0 L1499.1,551.1 L1536.1,565.9 L1573.1,577.0 L1602.7,588.1 L1628.6,602.9 L1665.6,621.4 L1702.6,639.9 L1720.0,647.3" fill="none" stroke="#f9d6a3" stroke-width="7" stroke-linejoin="round" stroke-linecap="round"/>
<path d="M1565.7,540.0 L1587.9,554.8 L1610.1,577.0 L1632.3,599.2" fill="none" stroke="#d8ae77" stroke-width="8.8" stroke-linejoin="round" stroke-linecap="round"/><path d="M1565.7,540.0 L1587.9,554.8 L1610.1,577.0 L1632.3,599.2" fill="none" stroke="#f9d6a3" stroke-width="7" stroke-linejoin="round" stroke-linecap="round"/>
<path d="M995.4,200.7 L1017.6,182.2 L1036.1,160.0" fill="none" stroke="#d98a72" stroke-width="10.8" stroke-linejoin="round" stroke-linecap="round"/><path d="M995.4,200.7 L1017.6,182.2 L1036.1,160.0" fill="none" stroke="#f6a890" stroke-width="9" stroke-linejoin="round" stroke-linecap="round"/>
<path d="M1036.1,160.0 L1062.0,200.7 L1076.8,237.7 L1086.1,271.0 L1095.3,300.6 L1121.2,322.8 L1154.5,337.6 L1191.5,352.4 L1240.0,369.1" fill="none" stroke="#c0607a" stroke-width="11.2" stroke-linejoin="round" stroke-linecap="round"/><path d="M1036.1,160.0 L1062.0,200.7 L1076.8,237.7 L1086.1,271.0 L1095.3,300.6 L1121.2,322.8 L1154.5,337.6 L1191.5,352.4 L1240.0,369.1" fill="none" stroke="#e58fa0" stroke-width="9" stroke-linejoin="round" stroke-linecap="round"/>
<path d="M1240.0,371.0 L1277.0,382.1 L1314.0,393.2 L1369.5,404.3 L1406.5,419.1 L1462.1,456.1 L1499.1,478.3 L1536.1,493.1 L1591.6,515.3 L1628.6,533.8 L1647.1,548.6 L1658.2,560.1" fill="none" stroke="#c0607a" stroke-width="11.2" stroke-linejoin="round" stroke-linecap="round"/><path d="M1240.0,371.0 L1277.0,382.1 L1314.0,393.2 L1369.5,404.3 L1406.5,419.1 L1462.1,456.1 L1499.1,478.3 L1536.1,493.1 L1591.6,515.3 L1628.6,533.8 L1647.1,548.6 L1658.2,560.1" fill="none" stroke="#e58fa0" stroke-width="9" stroke-linejoin="round" stroke-linecap="round"/>
<path d="M1610.1,540.0 L1639.7,562.2 L1669.3,584.4 L1695.2,606.6 L1720.0,625.1" fill="none" stroke="#c0607a" stroke-width="11.2" stroke-linejoin="round" stroke-linecap="round"/><path d="M1610.1,540.0 L1639.7,562.2 L1669.3,584.4 L1695.2,606.6 L1720.0,625.1" fill="none" stroke="#e58fa0" stroke-width="9" stroke-linejoin="round" stroke-linecap="round"/>
<path d="M1095.3,300.6 L1102.7,326.5 L1108.3,341.3" fill="none" stroke="#c0607a" stroke-width="8" stroke-linejoin="round" stroke-linecap="round"/><path d="M1095.3,300.6 L1102.7,326.5 L1108.3,341.3" fill="none" stroke="#e58fa0" stroke-width="6" stroke-linejoin="round" stroke-linecap="round"/>
<path d="M1684.1,665.8 L1720.0,647.3" fill="none" stroke="#c0607a" stroke-width="8" stroke-linejoin="round" stroke-linecap="round"/><path d="M1684.1,665.8 L1720.0,647.3" fill="none" stroke="#e58fa0" stroke-width="6" stroke-linejoin="round" stroke-linecap="round"/>
<g><path id="lp0" d="M679.2,160.0 L708.8,178.5 L745.8,189.6 L790.2,182.2" fill="none"/><text font-size="9" font-family="Liberation Sans" fill="#3a3a3a" dy="3"><textPath href="#lp0" startOffset="20%">Nimitz Highway</textPath></text><path id="lp1" d="M843.0,160.0 L847.4,215.5 L854.8,271.0 L867.8,308.0" fill="none"/><text font-size="9" font-family="Liberation Sans" fill="#3a3a3a" dy="3"><textPath href="#lp1" startOffset="30%">Nimitz Highway</textPath></text><path id="lp2" d="M1036.1,160.0 L1062.0,200.7 L1076.8,237.7 L1086.1,271.0 L1095.3,300.6 L1121.2,322.8 L1154.5,337.6 L1191.5,352.4 L1240.0,369.1" fill="none"/><text font-size="9" font-family="Liberation Sans" fill="#3a3a3a" dy="3"><textPath href="#lp2" startOffset="8%">Lunalilo Freeway</textPath></text><path id="lp3" d="M1240.0,371.0 L1277.0,382.1 L1314.0,393.2 L1369.5,404.3 L1406.5,419.1 L1462.1,456.1 L1499.1,478.3 L1536.1,493.1 L1591.6,515.3 L1628.6,533.8 L1647.1,548.6 L1658.2,560.1" fill="none"/><text font-size="9" font-family="Liberation Sans" fill="#3a3a3a" dy="3"><textPath href="#lp3" startOffset="44%">Lunalilo Freeway</textPath></text><path id="lp4" d="M1240.0,415.4 L1351.0,456.1 L1432.5,485.7 L1521.3,519.0 L1591.6,548.6 L1610.1,560.1" fill="none"/><text font-size="9" font-family="Liberation Sans" fill="#3a3a3a" dy="3"><textPath href="#lp4" startOffset="40%">South Beretania Street</textPath></text><path id="lp5" d="M1062.0,341.3 L1099.0,356.1 L1143.4,374.6 L1191.5,396.8 L1240.0,415.3" fill="none"/><text font-size="9" font-family="Liberation Sans" fill="#3a3a3a" dy="3"><textPath href="#lp5" startOffset="45%">South Beretania Street</textPath></text><path id="lp6" d="M1240.0,448.7 L1288.1,467.2 L1351.0,493.1 L1395.4,511.6 L1454.7,533.8 L1499.1,552.3 L1521.3,560.1" fill="none"/><text font-size="9" font-family="Liberation Sans" fill="#3a3a3a" dy="3"><textPath href="#lp6" startOffset="48%">South King Street</textPath></text><path id="lp7" d="M1013.9,370.9 L1028.7,404.2 L1047.2,433.8 L1069.4,467.1 L1099.0,500.4 L1128.6,526.3 L1158.2,548.5 L1180.4,560.0" fill="none"/><text font-size="9" font-family="Liberation Sans" fill="#3a3a3a" dy="3"><textPath href="#lp7" startOffset="35%">Kapiolani Boulevard</textPath></text><path id="lp8" d="M1388.0,628.8 L1425.0,639.9 L1462.1,654.7 L1499.1,669.5 L1536.1,682.5 L1573.1,684.3" fill="none"/><text font-size="9" font-family="Liberation Sans" fill="#3a3a3a" dy="3"><textPath href="#lp8" startOffset="30%">Kapiolani Boulevard</textPath></text><path id="lp9" d="M1506.5,739.9 L1536.1,769.5 L1565.7,799.1 L1595.3,832.4 L1628.6,865.7 L1665.6,895.3" fill="none"/><text font-size="9" font-family="Liberation Sans" fill="#3a3a3a" dy="3"><textPath href="#lp9" startOffset="45%">Ala Wai Boulevard</textPath></text><path id="lp10" d="M1447.3,367.3 L1476.9,348.7 L1506.5,341.3 L1543.5,337.6 L1565.7,330.2 L1595.3,315.4" fill="none"/><text font-size="9" font-family="Liberation Sans" fill="#3a3a3a" dy="3"><textPath href="#lp10" startOffset="40%">Manoa Road</textPath></text><path id="lp11" d="M1595.3,315.4 L1628.6,300.6 L1665.6,287.7 L1720.0,282.1" fill="none"/><text font-size="9" font-family="Liberation Sans" fill="#3a3a3a" dy="3"><textPath href="#lp11" startOffset="15%">East Manoa Road</textPath></text><path id="lp12" d="M1299.2,300.6 L1314.0,315.4 L1351.0,341.3 L1388.0,363.6" fill="none"/><text font-size="9" font-family="Liberation Sans" fill="#3a3a3a" dy="3"><textPath href="#lp12" startOffset="15%">Wilder Avenue</textPath></text><path id="lp13" d="M1388.0,456.1 L1406.5,426.5 L1425.0,400.6 L1447.3,367.3 L1484.3,333.9" fill="none"/><text font-size="9" font-family="Liberation Sans" fill="#3a3a3a" dy="3"><textPath href="#lp13" startOffset="40%">Punahou Street</textPath></text><path id="lp14" d="M1639.7,456.1 L1643.4,419.1 L1654.5,389.5 L1684.1,337.6 L1720.0,300.6" fill="none"/><text font-size="9" font-family="Liberation Sans" fill="#3a3a3a" dy="3"><textPath href="#lp14" startOffset="20%">University Avenue</textPath></text><path id="lp15" d="M980.6,544.8 L1017.6,515.2 L1054.6,481.9 L1084.2,452.3 L1106.4,419.0 L1124.9,389.4" fill="none"/><text font-size="9" font-family="Liberation Sans" fill="#3a3a3a" dy="3"><textPath href="#lp15" startOffset="55%">Ward Avenue</textPath></text><path id="lp16" d="M880.7,456.0 L914.0,430.1 L951.0,407.9 L988.0,389.4 L1021.3,378.3" fill="none"/><text font-size="9" font-family="Liberation Sans" fill="#3a3a3a" dy="3"><textPath href="#lp16" startOffset="20%">South Street</textPath></text><path id="lp17" d="M877.0,322.8 L910.3,300.6 L943.6,278.4 L976.9,256.2" fill="none"/><text font-size="9" font-family="Liberation Sans" fill="#3a3a3a" dy="3"><textPath href="#lp17" startOffset="40%">Alakea Street</textPath></text><path id="lp18" d="M888.1,293.2 L914.0,326.5 L936.2,359.8 L958.4,389.4" fill="none"/><text font-size="9" font-family="Liberation Sans" fill="#3a3a3a" dy="3"><textPath href="#lp18" startOffset="30%">Queen Street</textPath></text><path id="lp19" d="M962.1,245.1 L976.9,226.6 L995.4,200.7" fill="none"/><text font-size="9" font-family="Liberation Sans" fill="#3a3a3a" dy="3"><textPath href="#lp19" startOffset="0%">Pali Highway</textPath></text><path id="lp20" d="M1080.5,193.3 L1102.7,226.6 L1124.9,252.5 L1150.8,271.0" fill="none"/><text font-size="9" font-family="Liberation Sans" fill="#3a3a3a" dy="3"><textPath href="#lp20" startOffset="10%">Iolani Avenue</textPath></text><path id="lp21" d="M1180.4,278.4 L1210.0,271.0 L1240.0,252.5" fill="none"/><text font-size="9" font-family="Liberation Sans" fill="#3a3a3a" dy="3"><textPath href="#lp21" startOffset="0%">Prospect Street</textPath></text><path id="lp22" d="M1173.0,478.2 L1191.5,433.8 L1206.3,396.8 L1224.8,359.8" fill="none"/><text font-size="9" font-family="Liberation Sans" fill="#3a3a3a" dy="3"><textPath href="#lp22" startOffset="10%">Pensacola Street</textPath></text><path id="lp23" d="M1176.7,541.1 L1191.5,500.4 L1206.3,463.4 L1224.8,426.4" fill="none"/><text font-size="9" font-family="Liberation Sans" fill="#3a3a3a" dy="3"><textPath href="#lp23" startOffset="10%">Piikoi Street</textPath></text><path id="lp24" d="M1476.9,769.5 L1513.9,806.5 L1547.2,836.1 L1591.6,876.8 L1628.6,910.1" fill="none"/><text font-size="9" font-family="Liberation Sans" fill="#3a3a3a" dy="3"><textPath href="#lp24" startOffset="45%">Kuhio Avenue</textPath></text><path id="lp25" d="M1543.5,456.1 L1628.6,459.8" fill="none"/><text font-size="9" font-family="Liberation Sans" fill="#3a3a3a" dy="3"><textPath href="#lp25" startOffset="20%">Metcalf Street</textPath></text><path id="lp26" d="M1573.1,504.2 L1720.0,507.9" fill="none"/><text font-size="9" font-family="Liberation Sans" fill="#3a3a3a" dy="3"><textPath href="#lp26" startOffset="30%">Dole Street</textPath></text><path id="lp27" d="M1517.6,222.9 L1528.7,189.6 L1547.2,160.0" fill="none"/><text font-size="9" font-family="Liberation Sans" fill="#3a3a3a" dy="3"><textPath href="#lp27" startOffset="0%">Round Top Drive</textPath></text><path id="lp28" d="M1573.1,408.0 L1613.8,389.5" fill="none"/><text font-size="9" font-family="Liberation Sans" fill="#3a3a3a" dy="3"><textPath href="#lp28" startOffset="0%">Atherton Road</textPath></text><path id="lp29" d="M1306.6,676.9 L1351.0,665.8 L1395.4,662.1" fill="none"/><text font-size="9" font-family="Liberation Sans" fill="#3a3a3a" dy="3"><textPath href="#lp29" startOffset="10%">Ala Wai Promenade</textPath></text><path id="lp30" d="M1069.4,341.3 L1121.2,352.4 L1165.6,367.2 L1210.0,378.3" fill="none"/><text font-size="9" font-family="Liberation Sans" fill="#3a3a3a" dy="3"><textPath href="#lp30" startOffset="55%">Kinau Street</textPath></text></g>
<text x="0" y="0" font-size="9" font-family="Liberation Sans" fill="#444" transform="translate(1595 286) rotate(-36)">Sonoma Street</text><text x="0" y="0" font-size="9" font-family="Liberation Sans" fill="#444" transform="translate(1636 278) rotate(-36)">Ferdinand Avenue</text>
<text x="855" y="229" font-size="9" font-family="Liberation Sans" fill="#555">The Arts District</text>
<text x="895" y="272" font-size="9" font-family="Liberation Sans" fill="#555">Downtown</text>
<text x="1255" y="525" font-size="9" font-family="Liberation Sans" fill="#555">Pawaa</text>
<text x="1597" y="583" font-size="9" font-family="Liberation Sans" fill="#555">Moiliili</text>
<text x="1543" y="389" font-size="9" font-family="Liberation Sans" fill="#555">Rocky</text>
<text x="1549" y="400" font-size="9" font-family="Liberation Sans" fill="#555">Hill</text>
<text x="1320" y="375" font-size="9" font-family="Liberation Sans" fill="#555">Young Street</text>
<text x="1290" y="500" font-size="9" font-family="Liberation Sans" fill="#555">Liona Street</text>
<text x="1378" y="716" font-size="9" font-family="Liberation Sans" fill="#555">Ena Road</text>
<text x="1470" y="800" font-size="9" font-family="Liberation Sans" fill="#555">Lewers Street</text>
<text x="1258" y="225" font-size="9" font-style="italic" font-family="Liberation Sans" fill="#6a8a3a">R. L. Stevenson</text><text x="1272" y="236" font-size="9" font-style="italic" font-family="Liberation Sans" fill="#6a8a3a">Middle</text><text x="1273" y="247" font-size="9" font-style="italic" font-family="Liberation Sans" fill="#6a8a3a">School</text>
<text x="1316" y="226" font-size="9" font-style="italic" font-family="Liberation Sans" fill="#6a8a3a">Roosevelt</text><text x="1308" y="237" font-size="9" font-style="italic" font-family="Liberation Sans" fill="#6a8a3a">High School</text>
<text x="1148" y="468" font-size="9" font-style="italic" font-family="Liberation Sans" fill="#6a8a3a">McKinley</text><text x="1140" y="479" font-size="9" font-style="italic" font-family="Liberation Sans" fill="#6a8a3a">High School</text>
<text x="1473" y="690" font-size="9" font-style="italic" font-family="Liberation Sans" fill="#6a9a6a">Ala Wai</text><text x="1466" y="701" font-size="9" font-style="italic" font-family="Liberation Sans" fill="#6a9a6a">Community</text>
<text x="1568" y="735" font-size="9" font-style="italic" font-family="Liberation Sans" fill="#6a8a3a">Tolani School</text>
<text x="1686" y="720" font-size="9" font-style="italic" font-family="Liberation Sans" fill="#6a8a3a">Kaimuki</text>
<text x="1610" y="478" font-size="9" font-style="italic" font-family="Liberation Sans" fill="#6a8a3a">University</text><text x="1612" y="489" font-size="9" font-style="italic" font-family="Liberation Sans" fill="#6a8a3a">Laboratory</text>
<text x="860" y="199" font-size="12.5" font-family="Liberation Sans" fill="#6e6e6e">Chinatown</text>
<text x="933" y="328" font-size="12.5" font-family="Liberation Sans" fill="#6e6e6e">Hawaii Capital</text><text x="931" y="341" font-size="12.5" font-family="Liberation Sans" fill="#6e6e6e">Historic District</text>
<text x="1129" y="431" font-size="12" font-family="Liberation Sans" fill="#6e6e6e">Makiki Kai</text><text x="946" y="476" font-size="12" font-family="Liberation Sans" fill="#6e6e6e">Kaka'ako</text>
<text x="1456" y="252" font-size="12" font-family="Liberation Sans" fill="#6e6e6e">Makiki</text><text x="1598" y="375" font-size="11" font-family="Liberation Sans" fill="#6e6e6e">Lower Manoa</text>
<text x="1434" y="593" font-size="12" font-family="Liberation Sans" fill="#6e6e6e">McCully</text><text x="1486" y="848" font-size="12" font-family="Liberation Sans" fill="#6e6e6e">Waikiki</text>
<text x="1659" y="470" font-size="11.5" font-style="italic" font-family="Liberation Sans" fill="#6f7f3a">University</text><text x="1659" y="483" font-size="11.5" font-style="italic" font-family="Liberation Sans" fill="#6f7f3a">of Hawaiʻi</text><text x="1659" y="496" font-size="11.5" font-style="italic" font-family="Liberation Sans" fill="#6f7f3a">at Manoa</text>
<text x="748" y="314" font-size="9.5" font-style="italic" font-family="Liberation Sans" fill="#5d8fb3">Honolulu</text><text x="753" y="326" font-size="9.5" font-style="italic" font-family="Liberation Sans" fill="#5d8fb3">Harbor</text>
<text x="655" y="301" font-size="9" font-style="italic" font-family="Liberation Sans" fill="#b8454d">U.S. Coast</text><text x="662" y="310" font-size="9" font-style="italic" font-family="Liberation Sans" fill="#b8454d">Guard</text><text x="650" y="319" font-size="9" font-style="italic" font-family="Liberation Sans" fill="#b8454d">Base Honolulu</text>
<text x="800" y="526" font-size="9.5" font-family="Liberation Sans" fill="#333">Kakaako Waterfront</text>
<text x="1510" y="863" font-size="9" font-style="italic" font-family="Liberation Sans" fill="#d04040">Kalakaua</text><text x="1510" y="873" font-size="9" font-style="italic" font-family="Liberation Sans" fill="#d04040">Shopping</text>
<text x="1662" y="1001" font-size="9" font-weight="bold" font-family="Liberation Sans" fill="#7a2a4a">Honolulu</text><text x="1672" y="1011" font-size="9" font-weight="bold" font-family="Liberation Sans" fill="#7a2a4a">Zoo</text>
<text x="1654" y="843" font-size="9" font-family="Liberation Sans" fill="#3a8a3a">Ala Wai</text><text x="1652" y="853" font-size="9" font-family="Liberation Sans" fill="#3a8a3a">Golf Course</text>
<rect x="751" y="168" width="26" height="13" rx="2" fill="#f1e3c9" stroke="#c9b48f" stroke-width=".8"/><text x="764" y="178" font-size="9" text-anchor="middle" font-family="Liberation Sans" fill="#333">HI 92</text>
<rect x="931" y="520" width="26" height="13" rx="2" fill="#f1e3c9" stroke="#c9b48f" stroke-width=".8"/><text x="944" y="530" font-size="9" text-anchor="middle" font-family="Liberation Sans" fill="#333">HI 92</text>
<rect x="1283" y="677" width="26" height="13" rx="2" fill="#f1e3c9" stroke="#c9b48f" stroke-width=".8"/><text x="1296" y="687" font-size="9" text-anchor="middle" font-family="Liberation Sans" fill="#333">HI 92</text>
<circle cx="1043" cy="286" r="6" fill="#c01818"/><path d="M1039.5 286h7M1043 282.5v7" stroke="#fff" stroke-width="2"/>
<circle cx="1104" cy="390" r="6" fill="#c01818"/><path d="M1100.5 390h7M1104 386.5v7" stroke="#fff" stroke-width="2"/>
<circle cx="1386" cy="432" r="6" fill="#c01818"/><path d="M1382.5 432h7M1386 428.5v7" stroke="#fff" stroke-width="2"/>
<circle cx="1410" cy="438" r="6" fill="#c01818"/><path d="M1406.5 438h7M1410 434.5v7" stroke="#fff" stroke-width="2"/>
<text x="1425" y="821" font-size="13" font-family="Liberation Sans" fill="#2a80c8">P</text><text x="1697" y="532" font-size="13" font-family="Liberation Sans" fill="#2a80c8">P</text>
<rect x="869" y="549" width="414" height="186" fill="#000"/>
<clipPath id="stripclip"><path d="M896.6,551.5 L962.0,568.0 L975.6,566.5 L1023.0,578.0 L1281.0,636.0 L1254.0,732.0 L1213.0,720.0 L970.0,673.0 L871.0,650.0 Z"/></clipPath>
<g clip-path="url(#stripclip)">
<path d="M896.6,551.5 L962.0,568.0 L975.6,566.5 L1023.0,578.0 L1281.0,636.0 L1254.0,732.0 L1213.0,720.0 L970.0,673.0 L871.0,650.0 Z" fill="#8e8e8e"/>
<path d="M871.0,650.0 L884.0,606.0 L936.0,623.0 L1012.0,623.0 L1100.0,661.0 L1176.0,711.0 L1254.0,732.0 L970.0,673.0 Z" fill="#959595"/>
<path d="M896.6,551.5 L962.0,568.0 L936.0,597.0 L917.0,629.0 L909.0,635.0 L884.6,606.0 Z" fill="#b4b4b4"/>
<path d="M884.6,606.0 L909.0,635.0 L922.6,646.0 L871.0,650.0 Z" fill="#5a5a5a"/>
<path d="M962.0,568.0 L975.6,566.5 L1023.0,578.0 L1011.7,614.0 L992.7,604.5 L973.7,593.0 L958.6,602.6 L941.5,619.6 L932.0,638.6 L922.6,646.0 L909.0,635.0 L917.0,629.0 L936.0,597.0 Z" fill="#3a3a3a"/>
<path d="M973.7,593.0 L992.7,604.5 L1011.7,614.0 L1015.5,619.6 L1012.0,623.0 L941.5,623.0 L941.5,619.6 L958.6,602.6 Z" fill="#a0a0a0"/>
<path d="M1023.0,578.0 L1281.0,636.0 L1272.0,676.0 L1222.0,677.0 L1190.0,673.0 L1169.0,661.0 L1112.0,648.0 L1011.7,616.0 Z" fill="#858585"/>
<path d="M1011.7,623.0 L1112.0,655.0 L1169.0,668.0 L1180.0,675.0 L1185.0,700.0 L1176.0,711.0 L1100.0,690.0 L1040.0,660.0 L1012.0,630.0 Z" fill="#767676"/>
<path d="M1011.7,614.0 L1112.0,646.0 L1169.0,659.0 L1181.0,666.0 L1190.0,686.0 L1187.0,706.0 L1178.0,712.0 L1182.0,700.0 L1181.0,684.0 L1172.0,672.0 L1112.0,656.0 L1012.0,624.0 Z" fill="#d6d6d6"/>
<path d="M1190.0,673.0 L1222.0,677.0 L1217.0,716.0 L1192.0,710.0 L1188.0,690.0 Z" fill="#a8a8a8"/>
<path d="M1222.0,677.0 L1281.0,676.0 L1254.0,732.0 L1217.0,716.0 Z" fill="#3e3e3e"/>
<rect x="869" y="549" width="414" height="186" fill="#fff" opacity=".45" filter="url(#noise)"/>
<rect x="869" y="549" width="414" height="186" fill="#000" opacity=".3" filter="url(#noise2)"/>
</g>
</svg>
</div>
<div class="a" style="left:1px;top:1052px;width:1920px;height:28px;background:#f0f0f0"></div>
<div class="a" style="left:5px;top:1056px;width:200px;height:21px;background:#fff;border:1px solid #b4b4b4;border-radius:2px"></div>
<svg class="a" style="left:12px;top:1059px" width="14" height="14" viewBox="0 0 14 14"><circle cx="5.5" cy="5.5" r="4" fill="none" stroke="#555" stroke-width="1.1"/><path d="M8.5 8.5l4 4" stroke="#555" stroke-width="1.2"/></svg>
<div class="t" style="left:33px;top:1060px;color:#6a6a6a">Type to locate (Ctrl+K)</div>
<div class="t" style="left:1101px;top:1060px;font-size:11.2px;">Coordinate</div>
<div class="a" style="left:1159px;top:1056px;width:120px;height:21px;background:#fff;border:1px solid #b4b4b4;border-radius:2px"></div>
<div class="t" style="left:1168px;top:1060px;font-size:11.2px;">-17572006, 2425947</div>
<svg class="a" style="left:1283px;top:1058px" width="16" height="16" viewBox="0 0 16 16"><circle cx="8" cy="8" r="6" fill="none" stroke="#555" stroke-width="1.2"/><path d="M8 1v14M1 8h14" stroke="#555" stroke-width="1.2"/><path d="M3 3l10 10" stroke="#333" stroke-width="1.6"/></svg>
<div class="t" style="left:1313px;top:1060px;font-size:11.2px;">Scale</div>
<div class="a" style="left:1342px;top:1056px;width:79px;height:21px;background:#fff;border:1px solid #b4b4b4;border-radius:2px"></div>
<div class="a" style="left:1399px;top:1057px;width:1px;height:19px;background:#dadada"></div>
<div class="t" style="left:1346px;top:1060px;font-size:11.2px;">1:23290</div>
<div class="dd" style="left:1405.5px;top:1063.5px;border-width:5px 4.5px 0 4.5px;border-top-color:#444"></div>
<svg class="a" style="left:1433px;top:1058px" width="14" height="16" viewBox="0 0 14 16"><path d="M3.5 7V5a3.5 3.5 0 0 1 7 0v2" fill="none" stroke="#555" stroke-width="1.6"/><rect x="2" y="7" width="10" height="8" rx="1" fill="#555"/></svg>
<div class="t" style="left:1455px;top:1060px;font-size:11.2px;">Magnifier</div>
<div class="a" style="left:1502px;top:1056px;width:84px;height:21px;background:#fff;border:1px solid #b4b4b4;border-radius:2px"></div>
<div class="a" style="left:1571px;top:1057px;width:1px;height:19px;background:#e0e0e0"></div>
<div class="t" style="left:1507px;top:1060px;font-size:11.2px;">100%</div>
<svg class="a" style="left:1573px;top:1058px" width="10" height="17" viewBox="0 0 10 17"><path d="M1.5 7l3.5-4 3.5 4zM1.5 10l3.5 4 3.5-4z" fill="#555"/></svg>
<div class="t" style="left:1594px;top:1060px;font-size:11.2px;">Rotation</div>
<div class="a" style="left:1646px;top:1056px;width:83px;height:21px;background:#fff;border:1px solid #b4b4b4;border-radius:2px"></div>
<div class="a" style="left:1713px;top:1057px;width:1px;height:19px;background:#e0e0e0"></div>
<div class="t" style="left:1650px;top:1060px;font-size:11.2px;">0.0 °</div>
<svg class="a" style="left:1715px;top:1058px" width="10" height="17" viewBox="0 0 10 17"><path d="M1.5 7l3.5-4 3.5 4zM1.5 10l3.5 4 3.5-4z" fill="#555"/></svg>
<div class="a" style="left:1735px;top:1059px;width:14px;height:14px;border:1px solid #8a8a8a;background:#fff"></div>
<svg class="a" style="left:1736px;top:1060px" width="12" height="12" viewBox="0 0 12 12"><path d="M2.5 6l2.5 3.5 5-7.5" fill="none" stroke="#111" stroke-width="1.6"/></svg>
<div class="t" style="left:1753px;top:1060px;font-size:11.2px;">Render</div>
<svg class="a" style="left:1804px;top:1058px" width="16" height="16" viewBox="0 0 16 16"><circle cx="8" cy="8" r="6.5" fill="#ddd" stroke="#666"/><ellipse cx="8" cy="8" rx="3" ry="6.5" fill="none" stroke="#666"/><path d="M1.5 8h13M2.5 5h11M2.5 11h11" stroke="#666" stroke-width=".8"/></svg>
<div class="t" style="left:1821px;top:1060px;font-size:11.2px;">EPSG:3857</div>
<svg class="a" style="left:1897px;top:1058px" width="18" height="16" viewBox="0 0 18 16"><path d="M9 1.5c4.5 0 8 2.7 8 6s-3.5 6-8 6l3 2.5-5.5-2.7C3.5 12.5 1 10.2 1 7.5c0-3.3 3.5-6 8-6z" fill="#5a5a5a"/><circle cx="5.5" cy="7.5" r="1.1" fill="#fff"/><circle cx="9" cy="7.5" r="1.1" fill="#fff"/><circle cx="12.5" cy="7.5" r="1.1" fill="#fff"/></svg>
<div class="a" style="left:0;top:0;width:1px;height:1081px;background:#1e1e1e"></div>
<div class="a" style="left:0;top:1080px;width:1921px;height:1px;background:#1e1e1e"></div>
</body></html>
